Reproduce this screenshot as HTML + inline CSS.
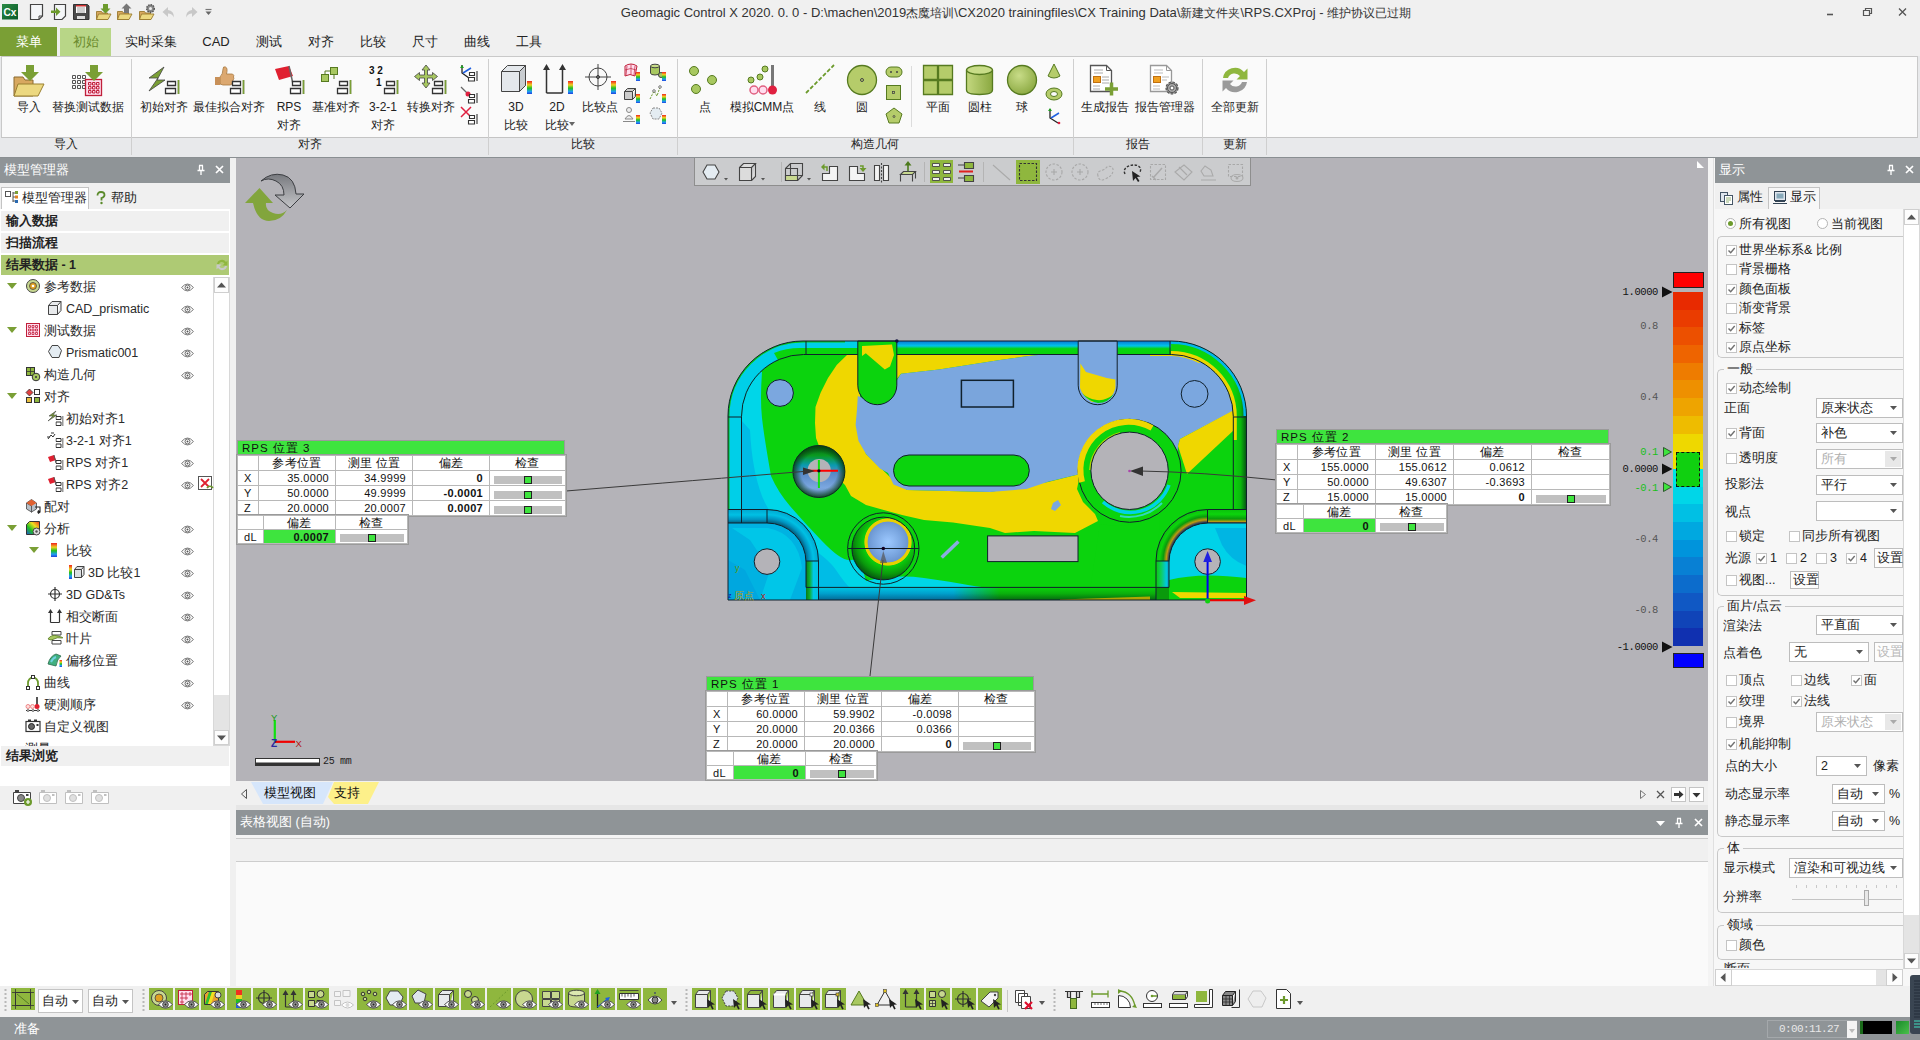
<!DOCTYPE html>
<html lang="zh"><head><meta charset="utf-8"><title>Geomagic Control X</title>
<style>
*{box-sizing:border-box;margin:0;padding:0}
html,body{width:1920px;height:1040px;overflow:hidden;background:#f0f0f0;font-family:"Liberation Sans",sans-serif;font-size:12px;color:#1e1e1e}
.a,.a>*{position:absolute}
.t{white-space:nowrap;line-height:14px;height:14px;overflow:visible}
.c{text-align:center}
svg{display:block;overflow:visible}
/* title */
#title{left:0;top:0;width:1920px;height:27px;background:#f0f0f0}
#ttxt span{font-size:12px}
#ttxt{left:560px;top:5px;width:912px;text-align:center;font-size:13px;letter-spacing:0;color:#333;white-space:nowrap;line-height:15px}
/* menu */
#menu{left:0;top:27px;width:1920px;height:29px;background:#f0f0f0}
#menu .m{top:7px;font-size:13px;width:80px;text-align:center;line-height:15px;white-space:nowrap;color:#222}
/* ribbon */
#ribbon{left:0;top:56px;width:1920px;height:101px;background:#e8e9eb}
#rbody{left:1px;top:0;width:1917px;height:82px;background:#fafafa;border:1px solid #c9c9c9;border-bottom-color:#c4c4c4}
.rsep{top:3px;width:1px;height:96px;background:#cfcfcf}
.rl{top:50px;width:120px;text-align:center;line-height:17px;font-size:12px;white-space:nowrap;color:#222}
.gl{top:81px;width:100px;text-align:center;line-height:15px;font-size:12px;white-space:nowrap;color:#222}
.ri{top:9px;width:34px;height:34px}
.si{width:18px;height:18px}
/* panels */
.ph{background:#8f9497;color:#fff;font-size:12.5px}
.tb{border-collapse:collapse;table-layout:fixed;background:#fff;font-size:11px;line-height:13px;font-family:"Liberation Sans",sans-serif;color:#111;outline:1px solid #9a9a9a}
.tb td{border:1px solid #b8b8b8;height:15px;padding:0 6px 0 0;text-align:right;white-space:nowrap;overflow:hidden;letter-spacing:.3px}
.tb.lo td{height:14px;line-height:12px}
.tb td.h{text-align:center;padding:0;font-size:12px}
.tb td.l{text-align:left;padding:0 0 0 6px}
.tb td.g{background:#3ee43e;font-weight:bold}
.tb b{font-weight:bold}
.tt{background:#3ee43e;font-size:11.5px;line-height:14px;height:15px;padding-left:4px;letter-spacing:1px;color:#111;white-space:nowrap;border:1px solid #9a9a9a;border-bottom:none}
.bar{display:block;margin:3px 0 0 4px;width:68px;height:8px;background:#c0c0c0;position:relative}
.bar i{position:absolute;left:30px;top:0;width:8px;height:8px;background:#3ee43e;border:1px solid #222}
.cl{right:50px;font-size:10.5px;letter-spacing:-.4px;font-family:"Liberation Mono",monospace;white-space:nowrap;line-height:12px}
</style></head><body>
<!--TITLE-->
<div id="title" class="a">
<svg class="a" style="left:0;top:0" width="220" height="27" viewBox="0 0 220 27">
<defs><linearGradient id="cxg" x1="0" y1="0" x2="1" y2="1"><stop offset="0" stop-color="#2a8a44"/><stop offset="1" stop-color="#0a5a2a"/></linearGradient></defs>
<rect x="2" y="4" width="16" height="15.500" fill="url(#cxg)"/><text x="3.500" y="16" font-family="Liberation Sans" font-weight="bold" font-size="11.500" fill="#fff" textLength="13" lengthAdjust="spacingAndGlyphs">Cx</text>
<path d="M30.500 4.500h12v11.500l-3.500 3.500h-8.500z" fill="#f4f6f8" stroke="#444" stroke-width="1.200"/><path d="M42.500 16h-3.500v3.500" fill="none" stroke="#444"/>
<path d="M54.500 4.500h11v11.500l-3.500 3.500h-7.500z" fill="#f4f6f8" stroke="#444" stroke-width="1.200"/><path d="M51 10.500h5v-3l4.500 4.200-4.500 4.200v-3h-5z" fill="#6c9a2c"/>
<path d="M73.500 4.500h14l1.500 1.500v13.500h-15.500z" fill="#4a4a4a" stroke="#333"/><rect x="76" y="5" width="10" height="8" fill="#fff"/><rect x="76" y="5" width="10" height="1.500" fill="#d03030"/><path d="M77 8h8M77 10h8M77 12h8" stroke="#888" stroke-width=".8"/><rect x="77" y="16" width="8" height="3" fill="#ddd"/>
<g id="fld"><path d="M96.500 11.500h5l1 1.500h5v6.500h-11z" fill="#d8a860" stroke="#9a7a30" stroke-width=".9"/><path d="M98.500 14h12.500l-3 5.500h-11.500z" fill="#ecd880" stroke="#9a7a30" stroke-width=".9"/></g>
<path d="M103 4h5v4.500h2.500l-5 5-5-5h2.500z" fill="#6c9a2c"/>
<use href="#fld" x="21"/><path d="M124 13h5v-4.500h2.500l-5-5-5 5h2.500z" fill="#777"/>
<use href="#fld" x="43"/><circle cx="150.500" cy="8.500" r="3.800" fill="#888" stroke="#555" stroke-width="1.400" stroke-dasharray="1.500 1"/><circle cx="150.500" cy="8.500" r="1.500" fill="#eee"/>
<path d="M168 7l-5.500 5 5.500 5v-3.500q4 0 6 4q0-7-6-7.500z" fill="#c8c8c8"/>
<path d="M192 7l5.500 5-5.500 5v-3.500q-4 0-6 4q0-7 6-7.500z" fill="#c8c8c8"/>
<path d="M205.500 9.500h6" stroke="#777" stroke-width="1.200"/><path d="M205.500 11.500h6l-3 3.500z" fill="#666"/>
</svg>
<div id="ttxt">Geomagic Control X 2020. 0. 0 - D:\machen\2019<span>杰魔培训</span>\CX2020 trainingfiles\CX Training Data\<span>新建文件夹</span>\RPS.CXProj - <span>维护协议已过期</span></div>
<svg class="a" style="left:1820px;top:4px" width="96" height="18" viewBox="0 0 96 18">
<path d="M7 10.500h6" stroke="#555" stroke-width="1.600"/>
<path d="M43.500 6.500h6v5h-6zM45.500 6.500v-2h6v5h-2" fill="none" stroke="#555" stroke-width="1.200"/>
<path d="M79 4.500l7 7M86 4.500l-7 7" stroke="#555" stroke-width="1.300"/>
</svg>
</div>
<!--MENU-->
<div id="menu" class="a">
<div style="left:0;top:0;width:57px;height:29px;background:#7a9f35"></div>
<div style="left:60px;top:1px;width:51px;height:28px;background:#b8d687"></div>
<div class="m" style="left:-11px;color:#fff">菜单</div>
<div class="m" style="left:46px;color:#6b8a2c">初始</div>
<div class="m" style="left:111px">实时采集</div>
<div class="m" style="left:176px">CAD</div>
<div class="m" style="left:229px">测试</div>
<div class="m" style="left:281px">对齐</div>
<div class="m" style="left:333px">比较</div>
<div class="m" style="left:385px">尺寸</div>
<div class="m" style="left:437px">曲线</div>
<div class="m" style="left:489px">工具</div>
</div>
<!--RIBBON-->
<div id="ribbon" class="a">
<div id="rbody"></div>
<div class="rsep" style="left:131px"></div><div class="rsep" style="left:488px"></div><div class="rsep" style="left:677px"></div>
<div class="rsep" style="left:1073px"></div><div class="rsep" style="left:1202px"></div><div class="rsep" style="left:1266px"></div>
<div class="rsep" style="left:911px;top:10px;height:61px;background:#dcdcdc"></div>
<!--RIB-START-->
<svg class="ri" style="left:12px;top:9px" width="34" height="34" viewBox="0 0 34 34"><path d="M2 12h9l2 3h8v16h-19z" fill="#d8a860" stroke="#8a6a30"/><path d="M6 19h26l-6 12h-24z" fill="#ecd880" stroke="#9a8030"/><path d="M14 0h8v7h5l-9 9-9-9h5z" fill="#7a9f35"/></svg>
<div class="rl" style="left:-31px;top:43px">导入</div>
<svg class="ri" style="left:71px;top:9px" width="34" height="34" viewBox="0 0 34 34"><g fill="none" stroke="#555" stroke-width="1"><path d="M1.500 10.500h3v3h-3zM6.500 10.500h3v3h-3zM11.500 10.500h3v3h-3zM1.500 15.500h3v3h-3zM6.500 15.500h3v3h-3zM11.500 15.500h3v3h-3zM1.500 20.500h3v3h-3zM6.500 20.500h3v3h-3zM11.500 20.500h3v3h-3z"/></g><rect x="14.500" y="14.500" width="16" height="16" fill="#fde" stroke="#c0203a" stroke-width="1.300"/><g fill="none" stroke="#c0203a"><path d="M17.500 17.500h2.500v2.500h-2.500zM21.500 17.500h2.500v2.500h-2.500zM25.500 17.500h2.500v2.500h-2.500zM17.500 21.500h2.500v2.500h-2.500zM21.500 21.500h2.500v2.500h-2.500zM25.500 21.500h2.500v2.500h-2.500zM17.500 25.500h2.500v2.500h-2.500zM21.500 25.500h2.500v2.500h-2.500zM25.500 25.500h2.500v2.500h-2.500z"/></g><path d="M19 0h8v7h5l-9 9-9-9h5z" fill="#7a9f35"/></svg>
<div class="rl" style="left:28px;top:43px">替换测试数据</div>
<svg class="ri" style="left:147px;top:9px" width="34" height="34" viewBox="0 0 34 34"><path d="M17 2l-15 11h9l-9 13 16-11h-8z" fill="#7a9f35" stroke="#444" stroke-width=".8"/><g transform="translate(0,1)"><path d="M20.500 15.500h8v4h-8zM18.500 22.500h10v5h-10zM31.500 14v14" fill="#fff" stroke="#333" stroke-width="1.300"/><path d="M31.500 14v14" stroke="#7a9f35" stroke-width="1.600"/></g></svg>
<div class="rl" style="left:104px;top:43px">初始对齐</div>
<svg class="ri" style="left:212px;top:9px" width="34" height="34" viewBox="0 0 34 34"><path d="M8 12q3-3 3-8q0-3 2.500-2t1 7h6q2 1 1 3q1 2-.5 3q.5 2-1 3q0 2-2 2h-7l-3-1z" fill="#dca870" stroke="#a87840" stroke-width=".8"/><rect x="3" y="12" width="5" height="8" fill="#c89058"/><g transform="translate(0,1)"><path d="M20.500 15.500h8v4h-8zM18.500 22.500h10v5h-10zM31.500 14v14" fill="#fff" stroke="#333" stroke-width="1.300"/><path d="M31.500 14v14" stroke="#7a9f35" stroke-width="1.600"/></g></svg>
<div class="rl" style="left:169px;top:43px">最佳拟合对齐</div>
<svg class="ri" style="left:272px;top:9px" width="34" height="34" viewBox="0 0 34 34"><path d="M3 4l14-3 4 10-14 4z" fill="#e02030"/><path d="M17 1l4 18" stroke="#666" stroke-width="1.500"/><g transform="translate(0,1)"><path d="M20.500 15.500h8v4h-8zM18.500 22.500h10v5h-10zM31.500 14v14" fill="#fff" stroke="#333" stroke-width="1.300"/><path d="M31.500 14v14" stroke="#7a9f35" stroke-width="1.600"/></g></svg>
<div class="rl" style="left:229px;top:43px">RPS</div>
<div class="rl" style="left:229px;top:61px">对齐</div>
<svg class="ri" style="left:319px;top:9px" width="34" height="34" viewBox="0 0 34 34"><rect x="2.500" y="9.500" width="7" height="7" fill="#a8c860" stroke="#567a20"/><rect x="11.500" y="2.500" width="7" height="7" fill="#a8c860" stroke="#567a20"/><path d="M6 9V6h5M15 10v4" stroke="#567a20" fill="none"/><g transform="translate(0,1)"><path d="M20.500 15.500h8v4h-8zM18.500 22.500h10v5h-10zM31.500 14v14" fill="#fff" stroke="#333" stroke-width="1.300"/><path d="M31.500 14v14" stroke="#7a9f35" stroke-width="1.600"/></g></svg>
<div class="rl" style="left:276px;top:43px">基准对齐</div>
<svg class="ri" style="left:366px;top:9px" width="34" height="34" viewBox="0 0 34 34"><text x="3" y="9" font-family="Liberation Sans" font-weight="bold" font-size="10" fill="#111">3 2</text><text x="10" y="21" font-family="Liberation Sans" font-weight="bold" font-size="10" fill="#111">1</text><g transform="translate(0,1)"><path d="M20.500 15.500h8v4h-8zM18.500 22.500h10v5h-10zM31.500 14v14" fill="#fff" stroke="#333" stroke-width="1.300"/><path d="M31.500 14v14" stroke="#7a9f35" stroke-width="1.600"/></g></svg>
<div class="rl" style="left:323px;top:43px">3-2-1</div>
<div class="rl" style="left:323px;top:61px">对齐</div>
<svg class="ri" style="left:414px;top:9px" width="34" height="34" viewBox="0 0 34 34"><path d="M12 0l4 5h-2.500v5h5v-2.500l5 4-5 4v-2.500h-5v5h2.500l-4 5-4-5h2.500v-5h-5v2.500l-5-4 5-4v2.500h5v-5h-2.500z" fill="#a8c860" stroke="#444" stroke-width=".8"/><g transform="translate(0,1)"><path d="M20.500 15.500h8v4h-8zM18.500 22.500h10v5h-10zM31.500 14v14" fill="#fff" stroke="#333" stroke-width="1.300"/><path d="M31.500 14v14" stroke="#7a9f35" stroke-width="1.600"/></g></svg>
<div class="rl" style="left:371px;top:43px">转换对齐</div>
<svg class="ri" style="left:499px;top:7px" width="34" height="34" viewBox="0 0 34 34"><defs><linearGradient id="rbv" x1="0" y1="0" x2="0" y2="1"><stop offset="0" stop-color="#f02020"/><stop offset=".3" stop-color="#f0d020"/><stop offset=".55" stop-color="#20c020"/><stop offset=".8" stop-color="#20a0f0"/><stop offset="1" stop-color="#2040e0"/></linearGradient></defs><path d="M2.500 8.500h18v20h-18zM2.500 8.500l6-6h18l-6 6M20.500 28.500l6-6v-20" fill="#e4e8ec" stroke="#444" stroke-linejoin="round"/><path d="M20.500 8.500l6-6v20l-6 6z" fill="#c8ccd0" stroke="#444"/><rect x="28" y="18" width="5" height="13" fill="url(#rbv)"/></svg>
<div class="rl" style="left:456px;top:43px">3D</div>
<div class="rl" style="left:456px;top:61px">比较</div>
<svg class="ri" style="left:540px;top:7px" width="34" height="34" viewBox="0 0 34 34"><defs><linearGradient id="rbv" x1="0" y1="0" x2="0" y2="1"><stop offset="0" stop-color="#f02020"/><stop offset=".3" stop-color="#f0d020"/><stop offset=".55" stop-color="#20c020"/><stop offset=".8" stop-color="#20a0f0"/><stop offset="1" stop-color="#2040e0"/></linearGradient></defs><path d="M6.500 30v-24M22.500 30v-24M6.500 30h16" stroke="#333" fill="none" stroke-width="1.500"/><path d="M6.500 1l-3.500 6h7zM22.500 1l-3.500 6h7z" fill="#333"/><rect x="28" y="18" width="5" height="13" fill="url(#rbv)"/></svg>
<div class="rl" style="left:497px;top:43px">2D</div>
<div class="rl" style="left:497px;top:61px">比较</div>
<svg class="ri" style="left:583px;top:7px" width="34" height="34" viewBox="0 0 34 34"><defs><linearGradient id="rbv" x1="0" y1="0" x2="0" y2="1"><stop offset="0" stop-color="#f02020"/><stop offset=".3" stop-color="#f0d020"/><stop offset=".55" stop-color="#20c020"/><stop offset=".8" stop-color="#20a0f0"/><stop offset="1" stop-color="#2040e0"/></linearGradient></defs><circle cx="15" cy="14" r="9" fill="none" stroke="#444" stroke-width="1"/><path d="M15 1v26M2 14h26" stroke="#444" stroke-width="1"/><circle cx="15" cy="14" r="1.500" fill="none" stroke="#333"/><rect x="28" y="18" width="5" height="13" fill="url(#rbv)"/></svg>
<div class="rl" style="left:540px;top:43px">比较点</div>
<svg style="left:569px;top:66px" width="6" height="4"><path d="M0 0h6l-3 4z" fill="#666"/></svg>
<svg class="ri" style="left:688px;top:7px" width="34" height="34" viewBox="0 0 34 34"><circle cx="6" cy="8" r="4.500" fill="#a8c860" stroke="#567a20"/><circle cx="24" cy="17" r="4.500" fill="#a8c860" stroke="#567a20"/><circle cx="8" cy="26" r="4.500" fill="#a8c860" stroke="#567a20"/></svg>
<div class="rl" style="left:645px;top:43px">点</div>
<svg class="ri" style="left:745px;top:7px" width="34" height="34" viewBox="0 0 34 34"><circle cx="6" cy="17" r="3" fill="#a8c860" stroke="#567a20"/><circle cx="15" cy="14" r="3" fill="#a8c860" stroke="#567a20"/><circle cx="20" cy="6" r="3" fill="#a8c860" stroke="#567a20"/><path d="M27.500 2v22" stroke="#777" stroke-width="3"/><circle cx="9" cy="27" r="4" fill="#fde" stroke="#e06080" stroke-width="1.500"/><circle cx="18" cy="27" r="4" fill="#fde" stroke="#e06080" stroke-width="1.500"/><circle cx="27.500" cy="27" r="4.500" fill="#e02040"/></svg>
<div class="rl" style="left:702px;top:43px">模拟CMM点</div>
<svg class="ri" style="left:803px;top:7px" width="34" height="34" viewBox="0 0 34 34"><path d="M3 30l28-28" stroke="#6c9a2c" stroke-width="1.800" stroke-dasharray="4 2"/></svg>
<div class="rl" style="left:760px;top:43px">线</div>
<svg class="ri" style="left:845px;top:7px" width="34" height="34" viewBox="0 0 34 34"><circle cx="17" cy="17" r="14.500" fill="#b5cc6a" stroke="#567a20" stroke-width="1.300"/><circle cx="17" cy="17" r="1.500" fill="none" stroke="#444"/></svg>
<div class="rl" style="left:802px;top:43px">圆</div>
<svg class="ri" style="left:921px;top:7px" width="34" height="34" viewBox="0 0 34 34"><path d="M2.500 2.500h14v14h-14zM17.500 2.500h14v14h-14zM2.500 17.500h14v14h-14zM17.500 17.500h14v14h-14z" fill="#b5cc6a" stroke="#567a20" stroke-width="1.300"/></svg>
<div class="rl" style="left:878px;top:43px">平面</div>
<svg class="ri" style="left:963px;top:7px" width="34" height="34" viewBox="0 0 34 34"><defs><linearGradient id="cyg" x1="0" x2="1"><stop offset="0" stop-color="#c4d880"/><stop offset="1" stop-color="#8aa840"/></linearGradient></defs><path d="M3.500 7v20q0 4.500 13 4.500t13-4.500v-20" fill="url(#cyg)" stroke="#567a20" stroke-width="1.300"/><ellipse cx="16.500" cy="7" rx="13" ry="4.500" fill="#c8dc88" stroke="#567a20" stroke-width="1.300"/></svg>
<div class="rl" style="left:920px;top:43px">圆柱</div>
<svg class="ri" style="left:1005px;top:7px" width="34" height="34" viewBox="0 0 34 34"><defs><radialGradient id="spg" cx=".4" cy=".35" r=".7"><stop offset="0" stop-color="#c8dc88"/><stop offset="1" stop-color="#8aa840"/></radialGradient></defs><circle cx="17" cy="17" r="14.500" fill="url(#spg)" stroke="#567a20" stroke-width="1.300"/></svg>
<div class="rl" style="left:962px;top:43px">球</div>
<svg class="ri" style="left:1088px;top:7px" width="34" height="34" viewBox="0 0 34 34"><path d="M2.500 2.500h16l5 5v21h-21z" fill="#fff" stroke="#555" stroke-width="1.300"/><path d="M18.500 2.500v5h5" fill="none" stroke="#555"/><path d="M6 7h9M6 10h9M14 14h7M14 17h7M14 20h7" stroke="#aaa"/><rect x="5.500" y="13.500" width="7" height="6" fill="#f0a020" stroke="#c07010"/><path d="M5 23h7M5 26h7" stroke="#aaa"/><path d="M17 26h13M23.500 19.500v13" stroke="#7a9f35" stroke-width="3.500"/></svg>
<div class="rl" style="left:1045px;top:43px">生成报告</div>
<svg class="ri" style="left:1148px;top:7px" width="34" height="34" viewBox="0 0 34 34"><path d="M2.500 2.500h16l5 5v21h-21z" fill="#fff" stroke="#999" stroke-width="1.300"/><path d="M18.500 2.500v5h5" fill="none" stroke="#999"/><path d="M6 7h9M6 10h9M14 14h7M14 17h5" stroke="#bbb"/><rect x="5.500" y="13.500" width="7" height="6" fill="#f0a020" stroke="#c07010"/><path d="M5 23h7M5 26h7" stroke="#bbb"/><circle cx="24" cy="25" r="6" fill="#999" stroke="#555" stroke-width="1.200" stroke-dasharray="2.500 1.500"/><circle cx="24" cy="25" r="4.500" fill="#aaa" stroke="#555"/><circle cx="24" cy="25" r="2" fill="#fff" stroke="#555"/></svg>
<div class="rl" style="left:1105px;top:43px">报告管理器</div>
<svg class="ri" style="left:1218px;top:7px" width="34" height="34" viewBox="0 0 34 34"><path d="M5 15a12 12 0 0 1 21-6l3.500-3.500v11h-11l3.500-3.500a7 7 0 0 0-12 2z" fill="#8fb73e"/><path d="M29 19a12 12 0 0 1-21 6l-3.500 3.500v-11h11l-3.500 3.500a7 7 0 0 0 12-2z" fill="#9a9a9a"/></svg>
<div class="rl" style="left:1175px;top:43px">全部更新</div>
<svg class="si" style="left:460px;top:7px" width="18" height="18" viewBox="0 0 18 18"><defs><linearGradient id="rbv" x1="0" y1="0" x2="0" y2="1"><stop offset="0" stop-color="#f02020"/><stop offset=".3" stop-color="#f0d020"/><stop offset=".55" stop-color="#20c020"/><stop offset=".8" stop-color="#20a0f0"/><stop offset="1" stop-color="#2040e0"/></linearGradient></defs><path d="M2 2v8l7 5" stroke="#222" fill="none" stroke-width="1.300"/><path d="M2 2l-2 3h4z" fill="#20a020"/><path d="M3 10l8-5" stroke="#2060e0" stroke-width="1.500"/><path d="M9.500 9.500h5v3h-5zM8.500 14.500h6v3.500h-6zM17 8v10" fill="#fff" stroke="#333" stroke-width="1.100"/></svg>
<svg class="si" style="left:460px;top:29px" width="18" height="18" viewBox="0 0 18 18"><defs><linearGradient id="rbv" x1="0" y1="0" x2="0" y2="1"><stop offset="0" stop-color="#f02020"/><stop offset=".3" stop-color="#f0d020"/><stop offset=".55" stop-color="#20c020"/><stop offset=".8" stop-color="#20a0f0"/><stop offset="1" stop-color="#2040e0"/></linearGradient></defs><path d="M1 2l8 8" stroke="#666" stroke-width="1.300"/><circle cx="8" cy="9" r="2.500" fill="#e02040"/><path d="M9.500 9.500h5v3h-5zM8.500 14.500h6v3.500h-6zM17 8v10" fill="#fff" stroke="#333" stroke-width="1.100"/></svg>
<svg class="si" style="left:460px;top:50px" width="18" height="18" viewBox="0 0 18 18"><defs><linearGradient id="rbv" x1="0" y1="0" x2="0" y2="1"><stop offset="0" stop-color="#f02020"/><stop offset=".3" stop-color="#f0d020"/><stop offset=".55" stop-color="#20c020"/><stop offset=".8" stop-color="#20a0f0"/><stop offset="1" stop-color="#2040e0"/></linearGradient></defs><path d="M1 1l10 10M11 1l-10 10" stroke="#e02040" stroke-width="1.500"/><path d="M9.500 9.500h5v3h-5zM8.500 14.500h6v3.500h-6zM17 8v10" fill="#fff" stroke="#333" stroke-width="1.100"/></svg>
<svg class="si" style="left:623px;top:7px" width="18" height="18" viewBox="0 0 18 18"><defs><linearGradient id="rbv" x1="0" y1="0" x2="0" y2="1"><stop offset="0" stop-color="#f02020"/><stop offset=".3" stop-color="#f0d020"/><stop offset=".55" stop-color="#20c020"/><stop offset=".8" stop-color="#20a0f0"/><stop offset="1" stop-color="#2040e0"/></linearGradient></defs><path d="M2 3q6-4 12 0l-2 10q-5-3-10 0z" fill="#fde" stroke="#c0203a"/><path d="M4 3l-1 9M8 1.500v10M12 3l-1 9M2 7q6-3 11 0" stroke="#c0203a" stroke-width=".7" fill="none"/><rect x="13" y="9" width="4" height="9" fill="url(#rbv)"/></svg>
<svg class="si" style="left:623px;top:29px" width="18" height="18" viewBox="0 0 18 18"><defs><linearGradient id="rbv" x1="0" y1="0" x2="0" y2="1"><stop offset="0" stop-color="#f02020"/><stop offset=".3" stop-color="#f0d020"/><stop offset=".55" stop-color="#20c020"/><stop offset=".8" stop-color="#20a0f0"/><stop offset="1" stop-color="#2040e0"/></linearGradient></defs><path d="M1.500 6.500h8v8h-8zM1.500 6.500l3-3h8l-3 3M9.500 14.500l3-3v-8" fill="#ccc" stroke="#444" stroke-linejoin="round"/><rect x="13" y="9" width="4" height="9" fill="url(#rbv)"/></svg>
<svg class="si" style="left:623px;top:50px" width="18" height="18" viewBox="0 0 18 18"><defs><linearGradient id="rbv" x1="0" y1="0" x2="0" y2="1"><stop offset="0" stop-color="#f02020"/><stop offset=".3" stop-color="#f0d020"/><stop offset=".55" stop-color="#20c020"/><stop offset=".8" stop-color="#20a0f0"/><stop offset="1" stop-color="#2040e0"/></linearGradient></defs><circle cx="6" cy="4" r="2.500" fill="#eee" stroke="#888"/><path d="M2 13q4-7 8 0zM0 15.500h12" fill="#eee" stroke="#888"/><rect x="13" y="9" width="4" height="9" fill="url(#rbv)"/></svg>
<svg class="si" style="left:649px;top:7px" width="18" height="18" viewBox="0 0 18 18"><defs><linearGradient id="rbv" x1="0" y1="0" x2="0" y2="1"><stop offset="0" stop-color="#f02020"/><stop offset=".3" stop-color="#f0d020"/><stop offset=".55" stop-color="#20c020"/><stop offset=".8" stop-color="#20a0f0"/><stop offset="1" stop-color="#2040e0"/></linearGradient></defs><path d="M1.500 3v7q0 2 4.500 2t4.500-2v-7" fill="#a8c860" stroke="#444"/><ellipse cx="6" cy="3" rx="4.500" ry="1.800" fill="#c8dc88" stroke="#444"/><circle cx="12" cy="12" r="2.500" fill="#a8c860" stroke="#444"/><rect x="13" y="9" width="4" height="9" fill="url(#rbv)"/></svg>
<svg class="si" style="left:649px;top:29px" width="18" height="18" viewBox="0 0 18 18"><defs><linearGradient id="rbv" x1="0" y1="0" x2="0" y2="1"><stop offset="0" stop-color="#f02020"/><stop offset=".3" stop-color="#f0d020"/><stop offset=".55" stop-color="#20c020"/><stop offset=".8" stop-color="#20a0f0"/><stop offset="1" stop-color="#2040e0"/></linearGradient></defs><path d="M1 14l4-8 3 5 3-9" fill="none" stroke="#6c9a2c" stroke-dasharray="2 1.200"/><circle cx="5" cy="6" r="1.300" fill="#fff" stroke="#444" stroke-width=".7"/><circle cx="11" cy="2" r="1.300" fill="#fff" stroke="#444" stroke-width=".7"/><rect x="13" y="9" width="4" height="9" fill="url(#rbv)"/></svg>
<svg class="si" style="left:649px;top:50px" width="18" height="18" viewBox="0 0 18 18"><defs><linearGradient id="rbv" x1="0" y1="0" x2="0" y2="1"><stop offset="0" stop-color="#f02020"/><stop offset=".3" stop-color="#f0d020"/><stop offset=".55" stop-color="#20c020"/><stop offset=".8" stop-color="#20a0f0"/><stop offset="1" stop-color="#2040e0"/></linearGradient></defs><path d="M4 2h6l3 5-3 6h-6l-3-6z" fill="#e4ecf2" stroke="#888" stroke-dasharray="2 1"/><rect x="13" y="9" width="4" height="9" fill="url(#rbv)"/></svg>
<svg class="si" style="left:885px;top:7px" width="18" height="18" viewBox="0 0 18 18"><defs><linearGradient id="rbv" x1="0" y1="0" x2="0" y2="1"><stop offset="0" stop-color="#f02020"/><stop offset=".3" stop-color="#f0d020"/><stop offset=".55" stop-color="#20c020"/><stop offset=".8" stop-color="#20a0f0"/><stop offset="1" stop-color="#2040e0"/></linearGradient></defs><rect x="1" y="4" width="16" height="10" rx="5" fill="#b5cc6a" stroke="#567a20"/><circle cx="6" cy="9" r="1" fill="#444"/><circle cx="12" cy="9" r="1" fill="#444"/></svg>
<svg class="si" style="left:885px;top:28px" width="18" height="18" viewBox="0 0 18 18"><defs><linearGradient id="rbv" x1="0" y1="0" x2="0" y2="1"><stop offset="0" stop-color="#f02020"/><stop offset=".3" stop-color="#f0d020"/><stop offset=".55" stop-color="#20c020"/><stop offset=".8" stop-color="#20a0f0"/><stop offset="1" stop-color="#2040e0"/></linearGradient></defs><rect x="1.500" y="1.500" width="14" height="14" fill="#b5cc6a" stroke="#567a20"/><rect x="7.500" y="7.500" width="2" height="2" fill="none" stroke="#444" stroke-width=".8"/></svg>
<svg class="si" style="left:885px;top:51px" width="18" height="18" viewBox="0 0 18 18"><defs><linearGradient id="rbv" x1="0" y1="0" x2="0" y2="1"><stop offset="0" stop-color="#f02020"/><stop offset=".3" stop-color="#f0d020"/><stop offset=".55" stop-color="#20c020"/><stop offset=".8" stop-color="#20a0f0"/><stop offset="1" stop-color="#2040e0"/></linearGradient></defs><path d="M9 1l8 6-3 9h-10l-3-9z" fill="#b5cc6a" stroke="#567a20"/><circle cx="9" cy="9.500" r="1" fill="none" stroke="#444" stroke-width=".8"/></svg>
<svg class="si" style="left:1045px;top:7px" width="18" height="18" viewBox="0 0 18 18"><defs><linearGradient id="rbv" x1="0" y1="0" x2="0" y2="1"><stop offset="0" stop-color="#f02020"/><stop offset=".3" stop-color="#f0d020"/><stop offset=".55" stop-color="#20c020"/><stop offset=".8" stop-color="#20a0f0"/><stop offset="1" stop-color="#2040e0"/></linearGradient></defs><path d="M9 1l6 12q-6 4-12 0z" fill="#b5cc6a" stroke="#567a20"/></svg>
<svg class="si" style="left:1045px;top:29px" width="18" height="18" viewBox="0 0 18 18"><defs><linearGradient id="rbv" x1="0" y1="0" x2="0" y2="1"><stop offset="0" stop-color="#f02020"/><stop offset=".3" stop-color="#f0d020"/><stop offset=".55" stop-color="#20c020"/><stop offset=".8" stop-color="#20a0f0"/><stop offset="1" stop-color="#2040e0"/></linearGradient></defs><ellipse cx="9" cy="9" rx="8" ry="6" fill="#b5cc6a" stroke="#567a20"/><ellipse cx="9" cy="9" rx="3.500" ry="2.500" fill="#fafafa" stroke="#567a20"/></svg>
<svg class="si" style="left:1045px;top:51px" width="18" height="18" viewBox="0 0 18 18"><defs><linearGradient id="rbv" x1="0" y1="0" x2="0" y2="1"><stop offset="0" stop-color="#f02020"/><stop offset=".3" stop-color="#f0d020"/><stop offset=".55" stop-color="#20c020"/><stop offset=".8" stop-color="#20a0f0"/><stop offset="1" stop-color="#2040e0"/></linearGradient></defs><path d="M5 2v9l8 5" stroke="#222" fill="none" stroke-width="1.300"/><path d="M5 1l-2 3h4z" fill="#20a020"/><path d="M6 11l8-5" stroke="#2060e0" stroke-width="1.500"/><circle cx="14" cy="16" r="1.300" fill="#e02040"/></svg>
<div class="gl" style="left:16px">导入</div>
<div class="gl" style="left:260px">对齐</div>
<div class="gl" style="left:533px">比较</div>
<div class="gl" style="left:825px">构造几何</div>
<div class="gl" style="left:1088px">报告</div>
<div class="gl" style="left:1185px">更新</div>
<!--RIB-END-->
</div>
<div class="a" style="left:0;top:157px;width:1920px;height:1px;background:#8a8f92"></div>
<!--LEFT-->
<div id="left" class="a" style="left:0;top:158px;width:236px;height:828px;background:#fff">
<!--LEFT-START-->
<svg width="0" height="0" style="left:0;top:0"><defs>
<symbol id="eye" viewBox="0 0 12 8"><path d="M.5 4Q6-2.400 11.500 4Q6 10.400 .5 4Z" fill="#fff" stroke="#777" stroke-width=".9"/><circle cx="6" cy="4" r="2.300" fill="none" stroke="#666" stroke-width=".9"/><circle cx="6" cy="4" r=".9" fill="#555"/></symbol>
<symbol id="tri" viewBox="0 0 10 6"><path d="M0 0h10l-5 6z" fill="#7a9f35"/></symbol>
<symbol id="albox" viewBox="0 0 8 10"><path d="M.500 .500h5v3h-5zM.500 6h5v3.500h-5zM7.500 0v10" fill="#fff" stroke="#333" stroke-width="1"/></symbol>
</defs></svg>
<div class="ph" style="left:0;top:0;width:230px;height:25px"></div>
<div class="t" style="left:4px;top:5px;color:#fff;font-size:12.500px">模型管理器</div>
<svg style="left:196px;top:6px" width="30" height="12" viewBox="0 0 30 12"><path d="M3 1.500h4M3.500 1.500v5M6.500 1.500v5M1.500 6.500h7M5 6.500v4.500" stroke="#fff" stroke-width="1.300" fill="none"/><path d="M20 2l7 7M27 2l-7 7" stroke="#fff" stroke-width="1.700"/></svg>
<div style="left:230px;top:0;width:6px;height:828px;background:#f0f0f0"></div>
<div style="left:0;top:25px;width:230px;height:26px;background:#f0f0f0"></div>
<div style="left:1px;top:29px;width:88px;height:22px;background:#fff;border:1px solid #c4c4c4;border-bottom:none"></div>
<svg style="left:5px;top:33px" width="14" height="13" viewBox="0 0 14 13"><rect x=".500" y=".500" width="5" height="5" fill="#fff" stroke="#555"/><path d="M8 2h2M8 6h2M8 10h2M8 1v10" stroke="#555"/><rect x="10" y="0" width="3" height="3" fill="#7a9f35"/><rect x="10" y="4.500" width="3" height="3" fill="#e08020"/><rect x="10" y="9" width="3" height="3" fill="#2a6ab0"/></svg>
<div class="t" style="left:22px;top:33px;font-size:12.500px">模型管理器</div>
<svg style="left:96px;top:33px" width="10" height="14" viewBox="0 0 10 14"><path d="M1.500 4.500Q1.500 1 5 1T8.500 4Q8.500 6 5.500 7V9.500" fill="none" stroke="#5a8a2a" stroke-width="1.800"/><circle cx="5.500" cy="12" r="1.200" fill="#5a8a2a"/></svg>
<div class="t" style="left:111px;top:33px;font-size:12.500px">帮助</div>
<div style="left:1px;top:53px;width:228px;height:20px;background:#f0f0f0"></div>
<div class="t" style="left:6px;top:56px;font-weight:bold;font-size:12.500px;color:#222">输入数据</div>
<div style="left:1px;top:75px;width:228px;height:20px;background:#f0f0f0"></div>
<div class="t" style="left:6px;top:78px;font-weight:bold;font-size:12.500px;color:#222">扫描流程</div>
<div style="left:1px;top:97px;width:228px;height:20px;background:#aeca74"></div>
<div class="t" style="left:6px;top:100px;font-weight:bold;font-size:12.500px;color:#222">结果数据 - 1</div>
<svg style="left:215px;top:100px" width="14" height="14" viewBox="0 0 14 14"><path d="M2 6a5 5 0 0 1 9-2l1.500-1.500v5h-5l2-2a3 3 0 0 0-5.500 .5z" fill="#8fb73e"/><path d="M12 8a5 5 0 0 1-9 2l-1.500 1.500v-5h5l-2 2a3 3 0 0 0 5.500-.5z" fill="#c8c8c8"/></svg>
<div style="left:1px;top:588px;width:228px;height:20px;background:#f0f0f0"></div>
<div class="t" style="left:6px;top:591px;font-weight:bold;font-size:12.500px;color:#222">结果浏览</div>
<div style="left:0;top:628px;width:230px;height:24px;background:#f0f0f0"></div>
<svg style="left:13px;top:631px" width="20" height="18" viewBox="0 0 20 18"><path d="M.500 3.500h17v11h-17z" fill="#fff" stroke="#444"/><path d="M2 1h4v2h-4z" fill="#444"/><circle cx="8" cy="9" r="3.500" fill="#888" stroke="#444"/><rect x="13" y="5" width="2.500" height="2" fill="#444"/><circle cx="15" cy="13" r="4" fill="#6c9a2c"/><path d="M13 13h4M15 11v4" stroke="#fff" stroke-width="1.200"/></svg>
<svg style="left:39px;top:631px" width="20" height="18" viewBox="0 0 20 18"><path d="M.500 3.500h17v11h-17z" fill="#fff" stroke="#c0c0c0"/><path d="M2 1h4v2h-4z" fill="#c0c0c0"/><circle cx="8" cy="9" r="3.500" fill="#e0e0e0" stroke="#c0c0c0"/><rect x="13" y="5" width="2.500" height="2" fill="#c0c0c0"/></svg>
<svg style="left:65px;top:631px" width="20" height="18" viewBox="0 0 20 18"><path d="M.500 3.500h17v11h-17z" fill="#fff" stroke="#c0c0c0"/><path d="M2 1h4v2h-4z" fill="#c0c0c0"/><circle cx="8" cy="9" r="3.500" fill="#e0e0e0" stroke="#c0c0c0"/><rect x="13" y="5" width="2.500" height="2" fill="#c0c0c0"/></svg>
<svg style="left:91px;top:631px" width="20" height="18" viewBox="0 0 20 18"><path d="M.500 3.500h17v11h-17z" fill="#fff" stroke="#c0c0c0"/><path d="M2 1h4v2h-4z" fill="#c0c0c0"/><circle cx="8" cy="9" r="3.500" fill="#e0e0e0" stroke="#c0c0c0"/><rect x="13" y="5" width="2.500" height="2" fill="#c0c0c0"/></svg>
<div style="left:213px;top:119px;width:17px;height:469px;background:#fff;border:1px solid #d8d8d8"></div>
<div style="left:214px;top:537px;width:15px;height:35px;background:#e4e4e4"></div>
<div style="left:214px;top:119px;width:15px;height:16px;border:1px solid #cfcfcf;background:#fdfdfd"></div>
<div style="left:214px;top:572px;width:15px;height:15px;border:1px solid #cfcfcf;background:#fdfdfd"></div>
<svg style="left:217px;top:124px" width="9" height="6" viewBox="0 0 9 6"><path d="M0 5.500l4.500-5 4.500 5z" fill="#555"/></svg>
<svg style="left:217px;top:577px" width="9" height="6" viewBox="0 0 9 6"><path d="M0 .5l4.500 5 4.500-5z" fill="#555"/></svg>
<svg style="left:7px;top:125px" width="10" height="6"><use href="#tri" width="10" height="6"/></svg>
<svg style="left:25px;top:120px" width="16" height="16" viewBox="0 0 16 16"><circle cx="8" cy="8" r="6.500" fill="#c8d890" stroke="#444"/><circle cx="8" cy="8" r="3.500" fill="#e0a020" stroke="#444" stroke-width=".8"/><circle cx="8" cy="8" r="1.300" fill="#fff"/></svg>
<div class="t" style="left:44px;top:122px;font-size:12.500px;color:#2a2a2a">参考数据</div>
<svg style="left:181px;top:125px" width="13" height="9"><use href="#eye" width="13" height="9"/></svg>
<svg style="left:47px;top:142px" width="16" height="16" viewBox="0 0 16 16"><path d="M1.500 5.500h9v9h-9zM1.500 5.500l3.500-4h9l-3.500 4M10.500 14.500l3.500-4v-9" fill="#e8eaec" stroke="#444" stroke-linejoin="round"/></svg>
<div class="t" style="left:66px;top:144px;font-size:12.500px;color:#2a2a2a">CAD_prismatic</div>
<svg style="left:181px;top:147px" width="13" height="9"><use href="#eye" width="13" height="9"/></svg>
<svg style="left:7px;top:169px" width="10" height="6"><use href="#tri" width="10" height="6"/></svg>
<svg style="left:25px;top:164px" width="16" height="16" viewBox="0 0 16 16"><rect x="1.500" y="1.500" width="13" height="13" fill="#fde" stroke="#c0203a"/><path d="M3.500 3.500h2v2h-2zM7 3.500h2v2h-2zM10.500 3.500h2v2h-2zM3.500 7h2v2h-2zM7 7h2v2h-2zM10.500 7h2v2h-2zM3.500 10.500h2v2h-2zM7 10.500h2v2h-2zM10.500 10.500h2v2h-2z" fill="none" stroke="#c0203a" stroke-width=".8"/></svg>
<div class="t" style="left:44px;top:166px;font-size:12.500px;color:#2a2a2a">测试数据</div>
<svg style="left:181px;top:169px" width="13" height="9"><use href="#eye" width="13" height="9"/></svg>
<svg style="left:47px;top:186px" width="16" height="16" viewBox="0 0 16 16"><path d="M5 1.500h6l3.500 5-2.500 7h-7l-3.500-6z" fill="#e4ecf2" stroke="#444"/></svg>
<div class="t" style="left:66px;top:188px;font-size:12.500px;color:#2a2a2a">Prismatic001</div>
<svg style="left:181px;top:191px" width="13" height="9"><use href="#eye" width="13" height="9"/></svg>
<svg style="left:25px;top:208px" width="16" height="16" viewBox="0 0 16 16"><rect x="1.500" y="1.500" width="8" height="8" fill="#8fb73e" stroke="#333"/><path d="M5.500 1.500v8M1.500 5.500h8" stroke="#333" stroke-width=".8"/><circle cx="11" cy="11" r="3.800" fill="#a8c860" stroke="#333"/><circle cx="11" cy="11" r="1" fill="#333"/></svg>
<div class="t" style="left:44px;top:210px;font-size:12.500px;color:#2a2a2a">构造几何</div>
<svg style="left:181px;top:213px" width="13" height="9"><use href="#eye" width="13" height="9"/></svg>
<svg style="left:7px;top:235px" width="10" height="6"><use href="#tri" width="10" height="6"/></svg>
<svg style="left:25px;top:230px" width="16" height="16" viewBox="0 0 16 16"><path d="M4.500 1l3.500 3.500-3.500 3.500-3.500-3.500z" fill="#e04040" stroke="#333" stroke-width=".8"/><rect x="9.500" y="1.500" width="5" height="5" fill="#fff" stroke="#333"/><rect x="1.500" y="9.500" width="5" height="5" fill="#e8c040" stroke="#333"/><rect x="9.500" y="9.500" width="5" height="5" fill="#8fb73e" stroke="#333"/></svg>
<div class="t" style="left:44px;top:232px;font-size:12.500px;color:#2a2a2a">对齐</div>
<svg style="left:47px;top:252px" width="16" height="16" viewBox="0 0 16 16"><path d="M9 1l-7 5h4l-5 5 9-6h-4z" fill="#7a9f35" stroke="#444" stroke-width=".6"/><use href="#albox" x="8.500" y="6" width="8" height="10"/></svg>
<div class="t" style="left:66px;top:254px;font-size:12.500px;color:#2a2a2a">初始对齐1</div>
<svg style="left:47px;top:274px" width="16" height="16" viewBox="0 0 16 16"><path d="M1 7l3-4 2 2 2-3" fill="none" stroke="#333" stroke-width="1"/><path d="M0 5h3M4 1h3" stroke="#333"/><use href="#albox" x="8.500" y="6" width="8" height="10"/></svg>
<div class="t" style="left:66px;top:276px;font-size:12.500px;color:#2a2a2a">3-2-1 对齐1</div>
<svg style="left:181px;top:279px" width="13" height="9"><use href="#eye" width="13" height="9"/></svg>
<svg style="left:47px;top:296px" width="16" height="16" viewBox="0 0 16 16"><path d="M1 3l6-2 2 5-6 2z" fill="#e02030"/><path d="M7 1l2 8" stroke="#555" stroke-width="1"/><use href="#albox" x="8.500" y="6" width="8" height="10"/></svg>
<div class="t" style="left:66px;top:298px;font-size:12.500px;color:#2a2a2a">RPS 对齐1</div>
<svg style="left:181px;top:301px" width="13" height="9"><use href="#eye" width="13" height="9"/></svg>
<svg style="left:47px;top:318px" width="16" height="16" viewBox="0 0 16 16"><path d="M1 3l6-2 2 5-6 2z" fill="#e02030"/><path d="M7 1l2 8" stroke="#555" stroke-width="1"/><use href="#albox" x="8.500" y="6" width="8" height="10"/></svg>
<div class="t" style="left:66px;top:320px;font-size:12.500px;color:#2a2a2a">RPS 对齐2</div>
<svg style="left:181px;top:323px" width="13" height="9"><use href="#eye" width="13" height="9"/></svg>
<svg style="left:25px;top:340px" width="16" height="16" viewBox="0 0 16 16"><path d="M1.500 5l5-3.500 5 3.500v6l-5 3-5-3z" fill="#b8c0c8" stroke="#444" stroke-width=".8"/><path d="M1.500 5l5 3v6.500" stroke="#444" stroke-width=".8" fill="none"/><path d="M1.500 5l5 3 5-3-5-3.500z" fill="#e06030"/><path d="M10 9h5v5h-3M15 14l-2-1.500M15 14l-2 1.500" stroke="#222" fill="none" stroke-width="1.100"/></svg>
<div class="t" style="left:44px;top:342px;font-size:12.500px;color:#2a2a2a">配对</div>
<svg style="left:7px;top:367px" width="10" height="6"><use href="#tri" width="10" height="6"/></svg>
<svg style="left:25px;top:362px" width="16" height="16" viewBox="0 0 16 16"><defs><linearGradient id="rb" x1="0" y1="1" x2="1" y2="0"><stop offset="0" stop-color="#2050e0"/><stop offset=".35" stop-color="#20c020"/><stop offset=".65" stop-color="#f0e020"/><stop offset="1" stop-color="#f03020"/></linearGradient></defs><path d="M1.500 4.500l3-3h10v10l-3 3h-10z" fill="url(#rb)" stroke="#333"/><circle cx="11.500" cy="11.500" r="3.500" fill="#ddd" stroke="#444"/><circle cx="11.500" cy="11.500" r="1.200" fill="#555"/></svg>
<div class="t" style="left:44px;top:364px;font-size:12.500px;color:#2a2a2a">分析</div>
<svg style="left:181px;top:367px" width="13" height="9"><use href="#eye" width="13" height="9"/></svg>
<svg style="left:29px;top:389px" width="10" height="6"><use href="#tri" width="10" height="6"/></svg>
<svg style="left:47px;top:384px" width="16" height="16" viewBox="0 0 16 16"><defs><linearGradient id="rb2" x1="0" y1="0" x2="0" y2="1"><stop offset="0" stop-color="#f02020"/><stop offset=".3" stop-color="#f0d020"/><stop offset=".55" stop-color="#20c020"/><stop offset=".8" stop-color="#20a0f0"/><stop offset="1" stop-color="#2040e0"/></linearGradient></defs><rect x="4" y="1" width="6" height="14" fill="url(#rb2)"/></svg>
<div class="t" style="left:66px;top:386px;font-size:12.500px;color:#2a2a2a">比较</div>
<svg style="left:181px;top:389px" width="13" height="9"><use href="#eye" width="13" height="9"/></svg>
<svg style="left:69px;top:406px" width="16" height="16" viewBox="0 0 16 16"><rect x="0" y="1" width="3" height="14" fill="url(#rb2)"/><path d="M5.500 5.500h7v8h-7zM5.500 5.500l2.500-3h7l-2.500 3M12.500 13.500l2.500-3v-8" fill="#dcdfe2" stroke="#444" stroke-linejoin="round"/></svg>
<div class="t" style="left:88px;top:408px;font-size:12.500px;color:#2a2a2a">3D 比较1</div>
<svg style="left:181px;top:411px" width="13" height="9"><use href="#eye" width="13" height="9"/></svg>
<svg style="left:47px;top:428px" width="16" height="16" viewBox="0 0 16 16"><circle cx="8" cy="8" r="4.500" fill="none" stroke="#333" stroke-width="1.200"/><path d="M8 1v14M1 8h14" stroke="#333" stroke-width="1.200"/></svg>
<div class="t" style="left:66px;top:430px;font-size:12.500px;color:#2a2a2a">3D GD&amp;Ts</div>
<svg style="left:181px;top:433px" width="13" height="9"><use href="#eye" width="13" height="9"/></svg>
<svg style="left:47px;top:450px" width="16" height="16" viewBox="0 0 16 16"><path d="M3.500 14.500v-11M12.500 14.500v-11M3.500 14.500h9" stroke="#333" fill="none" stroke-width="1.200"/><path d="M3.500 1l-2.500 4h5zM12.500 1l-2.500 4h5z" fill="#333"/></svg>
<div class="t" style="left:66px;top:452px;font-size:12.500px;color:#2a2a2a">相交断面</div>
<svg style="left:181px;top:455px" width="13" height="9"><use href="#eye" width="13" height="9"/></svg>
<svg style="left:47px;top:472px" width="16" height="16" viewBox="0 0 16 16"><path d="M5 1.500h9v3.500h-9zM5 10.500h9v3.500h-9z" fill="#fff" stroke="#444"/><path d="M1 9q3-5 10-3t4 2q-5-1-8 1t-6 0z" fill="#a8c860" stroke="#567a20" stroke-width=".8"/></svg>
<div class="t" style="left:66px;top:474px;font-size:12.500px;color:#2a2a2a">叶片</div>
<svg style="left:181px;top:477px" width="13" height="9"><use href="#eye" width="13" height="9"/></svg>
<svg style="left:47px;top:494px" width="16" height="16" viewBox="0 0 16 16"><path d="M1 12q2-8 8-10l5 2q-4 3-5 10z" fill="#40b080" stroke="#2a6a4a" stroke-width=".8"/><path d="M4 10q2-4 5-5" stroke="#70d0e0" stroke-width="2" fill="none"/><rect x="12.500" y="8" width="2.500" height="7" fill="url(#rb2)"/></svg>
<div class="t" style="left:66px;top:496px;font-size:12.500px;color:#2a2a2a">偏移位置</div>
<svg style="left:181px;top:499px" width="13" height="9"><use href="#eye" width="13" height="9"/></svg>
<svg style="left:25px;top:516px" width="16" height="16" viewBox="0 0 16 16"><path d="M3 14v-5a5 5.500 0 0 1 10 0v5" fill="none" stroke="#6c9a2c" stroke-width="1.800"/><rect x="1.500" y="12.500" width="3" height="3" fill="#fff" stroke="#333"/><rect x="11.500" y="12.500" width="3" height="3" fill="#fff" stroke="#333"/><rect x="6.500" y="1.500" width="3" height="3" fill="#fff" stroke="#333"/></svg>
<div class="t" style="left:44px;top:518px;font-size:12.500px;color:#2a2a2a">曲线</div>
<svg style="left:181px;top:521px" width="13" height="9"><use href="#eye" width="13" height="9"/></svg>
<svg style="left:25px;top:538px" width="16" height="16" viewBox="0 0 16 16"><path d="M12 1v9" stroke="#555" stroke-width="2"/><circle cx="12" cy="10.500" r="2.500" fill="#e02030"/><circle cx="3" cy="10.500" r="2" fill="#fdd" stroke="#e88"/><circle cx="7.500" cy="10.500" r="2" fill="#fdd" stroke="#e88"/><path d="M1 14.500h14" stroke="#333"/><circle cx="3" cy="14.500" r="1" fill="#fff" stroke="#333" stroke-width=".7"/><circle cx="8" cy="14.500" r="1" fill="#fff" stroke="#333" stroke-width=".7"/><circle cx="13" cy="14.500" r="1" fill="#fff" stroke="#333" stroke-width=".7"/></svg>
<div class="t" style="left:44px;top:540px;font-size:12.500px;color:#2a2a2a">硬测顺序</div>
<svg style="left:181px;top:543px" width="13" height="9"><use href="#eye" width="13" height="9"/></svg>
<svg style="left:25px;top:560px" width="16" height="16" viewBox="0 0 16 16"><rect x="1" y="3.500" width="14" height="10" fill="#fff" stroke="#333" stroke-width="1.200"/><rect x="3" y="1.500" width="3" height="2" fill="#333"/><rect x="9" y="1.500" width="3" height="2" fill="#333"/><circle cx="6.500" cy="8.500" r="3" fill="#666" stroke="#222"/><rect x="11.500" y="6" width="2" height="2" fill="#333"/></svg>
<div class="t" style="left:44px;top:562px;font-size:12.500px;color:#2a2a2a">自定义视图</div>
<svg style="left:198px;top:318px" width="16" height="16" viewBox="0 0 16 16"><rect x=".500" y=".500" width="13" height="13" fill="#fff" stroke="#555"/><path d="M3 3l8 8M11 3l-8 8" stroke="#e02030" stroke-width="1.800"/><path d="M9 12a3.500 3.500 0 0 1 6 0" stroke="#6c9a2c" stroke-width="1.500" fill="none"/></svg>
<div style="left:25px;top:584px;width:100px;height:4px;overflow:hidden"><div class="t" style="left:19px;top:-1px;font-size:12.500px">测量</div><svg style="left:0;top:0" width="16" height="4"><path d="M2 4l5-4v4z" fill="#333"/></svg></div>
<!--LEFT-END-->
</div>
<!--VIEWPORT-->
<div id="vp" class="a" style="left:236px;top:158px;width:1472px;height:623px;background:#b4b3b8;overflow:hidden">
<!--MODEL-START-->
<svg class="a" style="left:0;top:0" width="1472" height="623" viewBox="236 158 1472 623">
<defs>
<clipPath id="body"><path d="M728 600V416A75 75 0 0 1 803 341H1171A75.500 75 0 0 1 1246.500 416V600Z"/></clipPath>
<clipPath id="face"><path d="M741.500 509.500V416.500A62 62 0 0 1 803.500 354.500H1171.300A62 62 0 0 1 1233.300 416.500V509.500H1207.500A51.500 51.500 0 0 0 1156 561V587.400H818.500V561A51.500 51.500 0 0 0 767 509.500Z"/></clipPath>
<linearGradient id="gTop" x1="0" y1="341" x2="0" y2="355" gradientUnits="userSpaceOnUse"><stop offset="0" stop-color="#0a78d8"/><stop offset=".35" stop-color="#00c4e8"/><stop offset=".55" stop-color="#08d410"/><stop offset="1" stop-color="#0ad20c"/></linearGradient>
<linearGradient id="gLeft" x1="728" y1="0" x2="742" y2="0" gradientUnits="userSpaceOnUse"><stop offset="0" stop-color="#0cc418"/><stop offset=".3" stop-color="#00c8e4"/><stop offset="1" stop-color="#00d4e8"/></linearGradient>
<linearGradient id="gRight" x1="1233" y1="0" x2="1247" y2="0" gradientUnits="userSpaceOnUse"><stop offset="0" stop-color="#0cd40c"/><stop offset=".55" stop-color="#0ab80c"/><stop offset="1" stop-color="#064a14"/></linearGradient>
<linearGradient id="gBotL" x1="0" y1="587" x2="0" y2="600" gradientUnits="userSpaceOnUse"><stop offset="0" stop-color="#00c8e4"/><stop offset=".5" stop-color="#00a0cc"/><stop offset="1" stop-color="#046a96"/></linearGradient>
<linearGradient id="gBotR" x1="0" y1="587" x2="0" y2="600" gradientUnits="userSpaceOnUse"><stop offset="0" stop-color="#0cd40c"/><stop offset=".5" stop-color="#0ab00c"/><stop offset="1" stop-color="#066a10"/></linearGradient>
<linearGradient id="gBotMix" x1="818" y1="0" x2="1156" y2="0" gradientUnits="userSpaceOnUse"><stop offset="0" stop-color="#fff" stop-opacity="1"/><stop offset=".4" stop-color="#fff" stop-opacity="1"/><stop offset=".54" stop-color="#fff" stop-opacity="0"/></linearGradient>
<mask id="mBot"><rect x="818" y="587" width="340" height="14" fill="url(#gBotMix)"/></mask>
<radialGradient id="gFilL" cx="767" cy="561" r="51.500" gradientUnits="userSpaceOnUse"><stop offset=".75" stop-color="#04607e"/><stop offset=".82" stop-color="#0094c0"/><stop offset=".9" stop-color="#00c0e4"/><stop offset="1" stop-color="#00a8d0"/></radialGradient>
<radialGradient id="gFilR" cx="1207.500" cy="561" r="51.500" gradientUnits="userSpaceOnUse"><stop offset=".75" stop-color="#2a3a5a"/><stop offset=".8" stop-color="#c09a10"/><stop offset=".86" stop-color="#0a9a0c"/><stop offset=".93" stop-color="#0cd40c"/><stop offset="1" stop-color="#0ac00c"/></radialGradient>
<linearGradient id="gFilLt" x1="0" y1="509.500" x2="0" y2="523" gradientUnits="userSpaceOnUse"><stop offset="0" stop-color="#00a8d0"/><stop offset=".4" stop-color="#00c0e4"/><stop offset=".75" stop-color="#0094c0"/><stop offset="1" stop-color="#04607e"/></linearGradient>
<linearGradient id="gFilLr" x1="818.500" y1="0" x2="806" y2="0" gradientUnits="userSpaceOnUse"><stop offset="0" stop-color="#00c4e0"/><stop offset=".4" stop-color="#00c8e8"/><stop offset=".7" stop-color="#10b030"/><stop offset="1" stop-color="#0a7a18"/></linearGradient>
<linearGradient id="gFilRt" x1="0" y1="509.500" x2="0" y2="523" gradientUnits="userSpaceOnUse"><stop offset="0" stop-color="#0ac00c"/><stop offset=".35" stop-color="#0cd40c"/><stop offset=".7" stop-color="#0a9a0c"/><stop offset=".9" stop-color="#c09a10"/><stop offset="1" stop-color="#2a3a5a"/></linearGradient>
<linearGradient id="gFilRl" x1="1156" y1="0" x2="1169" y2="0" gradientUnits="userSpaceOnUse"><stop offset="0" stop-color="#0cc80c"/><stop offset=".4" stop-color="#10cc60"/><stop offset=".8" stop-color="#00c8e0"/><stop offset="1" stop-color="#0a9ab0"/></linearGradient>
<linearGradient id="gCs" x1="0" y1="445" x2="0" y2="498" gradientUnits="userSpaceOnUse"><stop offset="0" stop-color="#0a5a10"/><stop offset=".2" stop-color="#0a9a20"/><stop offset=".38" stop-color="#0a9ab0"/><stop offset=".55" stop-color="#5a8ac8"/><stop offset=".8" stop-color="#7ba7df"/><stop offset="1" stop-color="#6a90c4"/></linearGradient><radialGradient id="gCsR" cx="819" cy="471.500" r="26" gradientUnits="userSpaceOnUse"><stop offset=".7" stop-color="#063a10" stop-opacity="0"/><stop offset="1" stop-color="#063a10" stop-opacity=".85"/></radialGradient>
<radialGradient id="gSph" cx="888" cy="542" r="40" gradientUnits="userSpaceOnUse"><stop offset="0" stop-color="#9cc8ff"/><stop offset=".35" stop-color="#7aa6e0"/><stop offset=".5" stop-color="#6c96d0"/><stop offset=".52" stop-color="#e8d000"/><stop offset=".58" stop-color="#e8d000"/><stop offset=".6" stop-color="#0ccc0c"/><stop offset=".8" stop-color="#0a9a0c"/><stop offset="1" stop-color="#064a10"/></radialGradient>
</defs>
<!-- body base -->
<g clip-path="url(#body)">
<rect x="728" y="341" width="519" height="259" fill="#0bd30d"/>
<!-- top band -->
<rect x="728" y="341" width="519" height="14" fill="url(#gTop)"/>
<!-- top-left corner cyan -->
<path d="M728 520V416A75 75 0 0 1 803 341H860V355H803A62 62 0 0 0 741.500 416.500V520Z" fill="#00cfe8"/>
<path d="M728 520V416A75 75 0 0 1 803 341H845" fill="none" stroke="#0cc418" stroke-width="3"/>
<path d="M800 348H858V355H803Q790 355 778 360L774 353Q786 348 800 348Z" fill="#0bd30d"/>
<!-- right band -->
<path d="M1171 341A75.500 75 0 0 1 1246.500 416V520H1233.300V416.500A62 62 0 0 0 1171.300 354.500Z" fill="url(#gRight)"/>
<path d="M1171 341A75.500 75 0 0 1 1246.500 416" fill="none" stroke="#00b8e8" stroke-width="6"/>
<path d="M1171 354.500A62 62 0 0 1 1233.300 416.500V440" fill="none" stroke="#ecd600" stroke-width="7"/>
<!-- bottom band -->
<rect x="818" y="587.400" width="340" height="13" fill="url(#gBotR)"/>
<rect x="818" y="587.400" width="340" height="13" fill="url(#gBotL)" mask="url(#mBot)"/>
<path d="M1060 599.500L1150 596.500V600H1060Z" fill="#d8b000" opacity=".8"/>
</g>
<!-- face colour regions -->
<g clip-path="url(#face)">
<rect x="741" y="354" width="493" height="234" fill="#0bd30d"/>
<!-- cyan lower-left -->
<path d="M741 366L762 372Q760 400 762 418T771 476Q778 492 790 506T822 541T851 560T866 581Q895 574 924 578T968 585T1000 588H741Z" fill="#00d6e8"/>
<path d="M741 420L750 430Q752 470 762 496T800 540T836 570T850 588H741Z" fill="#00bce6"/>
<!-- yellow swoosh -->
<path d="M848 354H860V397L856 425L866 454L889 476L907 490L990 492L1048 482L1080 474L1077 489L1083 502L1095 514L1098 521L1075 533L1034 531L1005 533L990 528L953 522.500L924 520L902 515L882 509.400L866 505L851 496L845 485L830 470L819 446L816 438L815 423L815.500 407L820.600 392.700L828 378L836.700 365Z" fill="#efd700"/>
<path d="M896 354H1050L1026.500 356.200L1000 360L939 369.400L901 373.700L896 380Z" fill="#efd700"/>
<!-- light blue region -->
<path d="M857.800 396L857 409L855.600 425L858.500 441L866 454L880 468.500L888 473L893.500 484.600L907 490L990 492L1026.500 489L1048 481.700L1080 474L1094 437L1130 425L1165 441L1177 458L1178 446L1180 439L1233.300 411V354H1048L1026.500 356.200L1000 360L939 369.400L901 373.700L897 380L880 405Z" fill="#7ba7df"/>
<!-- right yellow wedge -->
<path d="M1234 410L1180 439L1178 446L1187 474L1234 430Z" fill="#efd700"/>
<path d="M1194 354A62 62 0 0 1 1233.300 400" fill="none" stroke="#efd700" stroke-width="6"/>
<path d="M1150 354.500H1171.300A62 62 0 0 1 1200 362" fill="none" stroke="#efd700" stroke-width="3"/>
<!-- green blob lower right of ring -->
<path d="M1100 524Q1130 530 1160 515L1156 590H1090Z" fill="#0bd30d"/>
<path d="M1053 503l5 -3 3 5 -6 6 -4 -2z" fill="#7ba7df"/>
</g>
<!-- lower-left pocket -->
<path d="M728 509.500H767A51.500 51.500 0 0 1 818.500 561V600H728Z" fill="#00b4e4"/>
<path d="M728 523H767A39 39 0 0 1 806 562V600H728Z" fill="#00b2e2"/>
<path d="M732 528H768Q798 534 802 568L790 600H760L770 570L750 540Z" fill="#00ccea" opacity=".75"/>
<path d="M728 560L745 570L760 600H728Z" fill="#00a4de" opacity=".8"/>
<path d="M767 509.500A51.500 51.500 0 0 1 818.500 561H806A39 39 0 0 0 767 523Z" fill="url(#gFilL)"/>
<rect x="728" y="509.500" width="39" height="13.500" fill="url(#gFilLt)"/>
<rect x="806" y="561" width="12.500" height="39" fill="url(#gFilLr)"/>
<!-- lower-right pocket -->
<path d="M1246.500 509.500H1207.500A51.500 51.500 0 0 0 1156 561V600H1246.500Z" fill="#0bd30d"/>
<path d="M1246.500 523H1208A39 39 0 0 0 1169 562V580Q1200 572 1246.500 578Z" fill="#00d2e8"/>
<path d="M1215 528H1246.500V566Q1230 560 1222 545Z" fill="#00b0e2" opacity=".85"/>
<path d="M1172 592L1180 598H1246V593Z" fill="#efd700"/>
<path d="M1207.500 509.500A51.500 51.500 0 0 0 1156 561H1169A39 39 0 0 1 1208 523Z" fill="url(#gFilR)"/>
<rect x="1207.500" y="509.500" width="39" height="13.500" fill="url(#gFilRt)"/>
<rect x="1156" y="561" width="13" height="39" fill="url(#gFilRl)"/>
<path d="M1156 587.400H1169V600H1156Z" fill="#0a9a0c"/>
<!-- features -->
<g stroke="#10202c" stroke-width="1" fill="none">
<!-- slot 1 -->
<path d="M857.800 341V385.200A19.500 19.500 0 0 0 896.800 385.200V341Z" fill="#0bd30d"/>
<path d="M862 346L892 344.600L894 355L890 366.500L884.800 369.400L865.800 353.300L862 356Z" fill="#efd700" stroke="none"/>
<!-- slot 2 -->
<path d="M1078.200 341V385.200A19.500 19.500 0 0 0 1117.200 385.200V341Z" fill="#7ba7df"/>
<path d="M1080.400 363.500L1086 372L1106.700 378L1115.400 379.600V388Q1113 398 1104 401L1092 402Q1083 397 1080 388Z" fill="#efd700" stroke="none"/>
<path d="M1082 393Q1088 401 1098 403Q1108 403 1114 394Q1106 401 1097 400Q1088 399 1082 393Z" fill="#0bd30d" stroke="none"/>
<!-- small holes -->
<circle cx="780" cy="393" r="13.400" fill="#7ba7df"/>
<circle cx="1194.600" cy="393.900" r="13.400" fill="#7ba7df"/>
<circle cx="767" cy="561.600" r="12.800" fill="#b4b3b8"/>
<circle cx="1207.600" cy="561.600" r="12.800" fill="#b4b3b8"/>
<!-- rect pocket -->
<rect x="961.400" y="380.300" width="52" height="26.700" fill="#7aa5dc" stroke-width="1.500"/>
<!-- oblong slot -->
<rect x="893.500" y="455" width="135.800" height="31" rx="15.500" fill="#0bd30d"/>
<!-- rect hole -->
<rect x="987.600" y="535.900" width="90.400" height="25.700" fill="#b4b3b8"/>
<!-- big hole -->
<circle cx="1129.600" cy="470.800" r="51.500" fill="#0bd30d"/>
<path d="M1082 482A48 48 0 0 1 1152 428" fill="none" stroke="#efd700" stroke-width="6"/><path d="M1090 470A40 40 0 0 1 1120 433" fill="none" stroke="#efd700" stroke-width="2" opacity=".7"/>
<path d="M1103 502A41 41 0 0 0 1169 485" fill="none" stroke="#00d2e8" stroke-width="3.500"/><path d="M1120 516A46 46 0 0 0 1162 503" fill="none" stroke="#30d8c0" stroke-width="2"/>
<circle cx="1129.600" cy="470.800" r="38.700" fill="#b4b3b8"/>
<!-- countersunk -->
<circle cx="818.900" cy="471.500" r="26" fill="url(#gCs)"/>
<circle cx="818.900" cy="471.500" r="26" fill="url(#gCsR)" stroke="none"/>
<circle cx="819.200" cy="470.500" r="11.600" fill="#b4b3b8" stroke="none"/>
<!-- sphere dimple -->
<circle cx="883.300" cy="548.500" r="35.700"/>
<circle cx="883.300" cy="548.500" r="31.400" fill="url(#gSph)"/>
<path d="M848 548.500H919"/>
<!-- edge lines -->
<path d="M741.500 523V416.500A62 62 0 0 1 803.500 354.500H857.800M896.800 354.500H1078.200M1117.200 354.500H1171.300A62 62 0 0 1 1233.300 416.500V509.500"/>
<path d="M728 600V416A75 75 0 0 1 803 341H1171A75.500 75 0 0 1 1246.500 416V600Z"/>
<path d="M728 509.500H767A51.500 51.500 0 0 1 818.500 561V600M728 523H767A39 39 0 0 1 806 562V587.400H1169V562A39 39 0 0 1 1208 523H1246M1246.500 509.500H1207.500A51.500 51.500 0 0 0 1156 561V600M767 509.500V523M806 561H818.500M1156 561H1169M1207.500 509.500V523M806 341V355M1170 341V355M728 417H741.500M1233.300 417H1246.500"/>
</g>
<path d="M941.700 557.500L958.400 541.500" stroke="#8aace0" stroke-width="3.500"/>
<circle cx="896.800" cy="341" r="1.800" fill="#101040"/>
<!-- RPS3 cross -->
<path d="M818.900 460V488" stroke="#10e010" stroke-width="2"/><path d="M803 470.800H838" stroke="#f00" stroke-width="2"/>
<path d="M803 467.500L815 471L803 475Z" fill="#333"/><circle cx="818.900" cy="470.800" r="1.600" fill="#102"/>
<!-- leader lines -->
<path d="M566 491Q700 480 803 471.500" fill="none" stroke="#3a3a3a" stroke-width="1"/>
<path d="M1277 480Q1200 472 1140 471" fill="none" stroke="#3a3a3a" stroke-width="1"/><path d="M1130 471L1143 466.500V476Z" fill="#333"/><circle cx="1129.500" cy="471" r="1.300" fill="#a4a"/>
<path d="M870 676L883 560" fill="none" stroke="#3a3a3a" stroke-width="1"/><path d="M883.300 551L880 563H887Z" fill="#555" opacity=".7"/><circle cx="883.300" cy="548.500" r="1.800" fill="#102"/>
<!-- origin axes -->
<path d="M1207.600 600V560" stroke="#0000f0" stroke-width="2"/><path d="M1207.600 551L1203.300 562H1212Z" fill="#2020e0"/>
<path d="M1207.600 600.300H1246" stroke="#f00000" stroke-width="2"/><path d="M1256 600.300L1244 596V605Z" fill="#e01010"/><circle cx="1207.600" cy="601" r="2.500" fill="#10d010"/>
<text x="735" y="571" font-size="9" fill="#5a9a10" font-family="Liberation Sans">y</text>
<text x="734" y="599" font-size="10" fill="#b0a010" font-family="Liberation Sans">原点</text><text x="761" y="599" font-size="9" fill="#c01010" font-family="Liberation Sans">x</text><text x="728" y="598" font-size="7" fill="#1010a0" font-family="Liberation Sans">z</text>
</svg>
<!--MODEL-END-->
<!--VPI-START-->
<!-- viewport toolbar -->
<div class="a" style="left:458px;top:0;width:557px;height:28px;background:#cbccce;border:1px solid #8e8e8e;border-top:none">
<svg class="a" style="left:0;top:0" width="557" height="27" viewBox="694 158 557 27">
<g stroke="#444" stroke-width="1.100" fill="none">
<path d="M702 172l4-7h8l4 7-4 7h-8z" fill="#e4ecf2"/><path d="M723 178h4l-2 2.500z" fill="#555" stroke="none"/>
<path d="M738.500 167.500h12v13h-12zM738.500 167.500l4-4h12l-4 4M750.500 180.500l4-4v-13" fill="#dcdcdc"/><path d="M760 178h4l-2 2.500z" fill="#555" stroke="none"/>
<path d="M784.500 168.500h12v12h-12zM784.500 168.500l5-5h12v12l-5 5M789.500 163.500v12h12M789.500 175.500l-5 5" fill="none"/><path d="M784.500 175.500h12v5h-12z" fill="#c8d890"/><path d="M806 178h4l-2 2.500z" fill="#555" stroke="none"/>
<path d="M828.500 166.500h8v14h-15v-7h7z" fill="#f4f4f4"/><path d="M826 171v-4h-3l0 0" stroke="#6c9a2c" stroke-width="1.500"/><path d="M820 167l3.500-3.500v7z" fill="#6c9a2c" stroke="none"/>
<path d="M848.500 166.500h8v7h7v7h-15z" fill="#f4f4f4"/><path d="M859 166h3v3" stroke="#6c9a2c" stroke-width="1.500"/><path d="M862 172l-3.500-4h7z" fill="#6c9a2c" stroke="none"/>
<path d="M873.500 165.500h5v15h-5zM882.500 165.500h5v15h-5z" fill="#f4f4f4"/><path d="M880.500 163v20" stroke-dasharray="2 1.500"/>
<path d="M899.500 174.500l3-3h12l-3 3zM899.500 174.500v7M911.500 174.500v7M914.500 171.500v7" fill="#c8d890"/><path d="M907 171v-6" stroke="#4c7a1c" stroke-width="1.600"/><path d="M907 161l-3.500 4.500h7z" fill="#4c7a1c" stroke="none"/>
<rect x="929" y="160" width="23" height="23" fill="#8fb73e" stroke="none"/>
<path d="M931.500 163.500h7v3h-7zM942.500 163.500h7v3h-7zM931.500 170.500h7v3h-7zM942.500 170.500h7v3h-7zM931.500 177.500h7v3h-7zM942.500 177.500h7v3h-7z" fill="#f0f0f0" stroke-width=".9"/>
<path d="M957 165h6M957 178h6M963.500 162.500h9v6h-9zM963.500 175.500h9v6h-9z" fill="#8fb73e"/><path d="M958 171.500h14" stroke="#e02020" stroke-width="2"/>
<path d="M992 165l17 15" stroke="#aaa"/>
<rect x="1015" y="160" width="24" height="24" fill="#8fb73e" stroke="none"/><rect x="1018.500" y="163.500" width="17" height="17" stroke="#333" stroke-dasharray="2.500 1.500"/>
<g stroke="#a8a8a8" stroke-dasharray="2.500 1.500"><circle cx="1053" cy="172" r="8"/><circle cx="1079" cy="172" r="8"/><path d="M1097 176c-2-6 6-5 8-8s8-2 7 3-4 6-8 8-6 1-7-3z"/><rect x="1149.500" y="164.500" width="15" height="15"/><rect x="1227.500" y="164.500" width="14" height="12"/></g>
<path d="M1050 172h6M1053 169v6M1076 172h6M1079 169v6" stroke="#a8a8a8"/>
<path d="M1124 174c-3-6 4-9 9-9s8 3 6 7" stroke="#333" stroke-dasharray="2.500 1.500" stroke-width="1.400"/><path d="M1131 171l1 10 2.500-3 2.500 4 1.500-1-2.500-4 3.500-.5z" fill="#222" stroke="none"/>
<path d="M1152 178l9-10M1151 176l4 4" stroke="#aaa" stroke-width="1.500"/>
<path d="M1174 172l9-7 8 7-8 8zM1178 167l8 8" stroke="#aaa"/><path d="M1200 180h15M1203 176h9l-2-6-6-4-4 5z" stroke="#aaa"/>
<ellipse cx="1236" cy="178" rx="6" ry="3.500" stroke="#aaa"/><circle cx="1236" cy="178" r="1.500" fill="#aaa" stroke="none"/>
</g>
<path d="M780.500 162v20M923.500 162v20M982.500 162v20" stroke="#b4b4b4"/>
</svg>
</div>
<!-- rotate icon -->
<svg class="a" style="left:8px;top:14px" width="64" height="52" viewBox="244 172 64 52">
<defs><linearGradient id="gra" x1="0" y1="174" x2="0" y2="208" gradientUnits="userSpaceOnUse"><stop offset="0" stop-color="#77797e"/><stop offset="1" stop-color="#c4c5c8"/></linearGradient></defs>
<path d="M261 181q10-9 22-6t13 19h8l-14 14-15-13h9q0-10-8-14t-15 0z" fill="url(#gra)" stroke="#3c3e42" stroke-width="1"/>
<path d="M245 203l14.500-15 13.500 15h-7q-1 7 7 10t14-3q-6 11-18 11t-16-18z" fill="#82a53c"/>
</svg>
<!-- axes + scale -->
<svg class="a" style="left:14px;top:552px" width="120" height="64" viewBox="250 710 120 64">
<path d="M274.800 741.500V720" stroke="#10e010" stroke-width="2.200"/><path d="M274.800 741.800H295" stroke="#f00000" stroke-width="2.200"/>
<text x="271" y="721" font-family="Liberation Sans" font-size="9.500" fill="#1a9a1a">Y</text>
<text x="295.500" y="746.500" font-family="Liberation Sans" font-size="9.500" fill="#b01818">X</text>
<text x="271" y="747" font-family="Liberation Sans" font-size="10" font-weight="bold" fill="#2a2aa0">Z</text>
<rect x="255" y="758" width="65" height="8" fill="#333"/><rect x="256" y="759" width="63" height="3.500" fill="#fff"/>
<text x="323" y="763.500" font-family="Liberation Mono" font-size="10" fill="#222" letter-spacing="-.3">25 mm</text>
</svg>
<!-- RPS 3 -->
<div class="a" style="left:1px;top:282px;width:328px;height:103px">
<div class="tt" style="left:0;top:0;width:328px">RPS 位置 3</div>
<table class="tb" style="left:0;top:15px;width:328px"><colgroup><col style="width:21px"><col style="width:77px"><col style="width:77px"><col style="width:77px"><col style="width:76px"></colgroup>
<tr><td></td><td class="h">参考位置</td><td class="h">测里 位置</td><td class="h">偏差</td><td class="h">检查</td></tr>
<tr><td class="l">X</td><td>35.0000</td><td>34.9999</td><td><b>0</b></td><td class="l" style="padding:0"><span class="bar"><i></i></span></td></tr>
<tr><td class="l">Y</td><td>50.0000</td><td>49.9999</td><td><b>-0.0001</b></td><td class="l" style="padding:0"><span class="bar"><i></i></span></td></tr>
<tr><td class="l">Z</td><td>20.0000</td><td>20.0007</td><td><b>0.0007</b></td><td class="l" style="padding:0"><span class="bar"><i></i></span></td></tr></table>
<table class="tb lo" style="left:0;top:75px;width:170px"><colgroup><col style="width:26px"><col style="width:72px"><col style="width:72px"></colgroup>
<tr><td></td><td class="h">偏差</td><td class="h">检查</td></tr>
<tr><td class="l">dL</td><td class="g">0.0007</td><td class="l" style="padding:0"><span class="bar" style="width:64px;margin-top:2px"><i style="left:28px"></i></span></td></tr></table>
</div>
<!-- RPS 2 -->
<div class="a" style="left:1040px;top:271px;width:333px;height:103px">
<div class="tt" style="left:0;top:0;width:333px">RPS 位置 2</div>
<table class="tb" style="left:0;top:15px;width:333px"><colgroup><col style="width:21px"><col style="width:78px"><col style="width:78px"><col style="width:78px"><col style="width:78px"></colgroup>
<tr><td></td><td class="h">参考位置</td><td class="h">测里 位置</td><td class="h">偏差</td><td class="h">检查</td></tr>
<tr><td class="l">X</td><td>155.0000</td><td>155.0612</td><td>0.0612</td><td></td></tr>
<tr><td class="l">Y</td><td>50.0000</td><td>49.6307</td><td>-0.3693</td><td></td></tr>
<tr><td class="l">Z</td><td>15.0000</td><td>15.0000</td><td><b>0</b></td><td class="l" style="padding:0"><span class="bar" style="width:70px"><i style="left:31px"></i></span></td></tr></table>
<table class="tb lo" style="left:0;top:75px;width:170px"><colgroup><col style="width:27px"><col style="width:72px"><col style="width:71px"></colgroup>
<tr><td></td><td class="h">偏差</td><td class="h">检查</td></tr>
<tr><td class="l">dL</td><td class="g">0</td><td class="l" style="padding:0"><span class="bar" style="width:64px;margin-top:2px"><i style="left:28px"></i></span></td></tr></table>
</div>
<!-- RPS 1 -->
<div class="a" style="left:470px;top:518px;width:328px;height:104px">
<div class="tt" style="left:0;top:0;width:328px">RPS 位置 1</div>
<table class="tb" style="left:0;top:15px;width:328px"><colgroup><col style="width:21px"><col style="width:77px"><col style="width:77px"><col style="width:77px"><col style="width:76px"></colgroup>
<tr><td></td><td class="h">参考位置</td><td class="h">测里 位置</td><td class="h">偏差</td><td class="h">检查</td></tr>
<tr><td class="l">X</td><td>60.0000</td><td>59.9902</td><td>-0.0098</td><td></td></tr>
<tr><td class="l">Y</td><td>20.0000</td><td>20.0366</td><td>0.0366</td><td></td></tr>
<tr><td class="l">Z</td><td>20.0000</td><td>20.0000</td><td><b>0</b></td><td class="l" style="padding:0"><span class="bar"><i></i></span></td></tr></table>
<table class="tb lo" style="left:0;top:75px;width:170px"><colgroup><col style="width:27px"><col style="width:72px"><col style="width:71px"></colgroup>
<tr><td></td><td class="h">偏差</td><td class="h">检查</td></tr>
<tr><td class="l">dL</td><td class="g">0</td><td class="l" style="padding:0"><span class="bar" style="width:64px;margin-top:2px"><i style="left:28px"></i></span></td></tr></table>
</div>
<!-- colour bar -->
<div class="a" style="left:1380px;top:110px;width:92px;height:405px">
<div style="left:57px;top:4px;width:31px;height:16px;background:#ff0000;border:1px solid #222"></div>
<div style="left:57px;top:24px;width:30px;height:354px;background:linear-gradient(#e82a00 0 5%,#ea3c00 0 10%,#ec5000 0 15%,#ee6400 0 20%,#ee7c00 0 25%,#ee9000 0 30%,#eea400 0 35%,#eebc00 0 40%,#eed800 0 45%,#f0e000 0 50%,#00e4e8 0 55%,#00d6e8 0 60%,#00c0e4 0 65%,#00a8e0 0 70%,#0094dc 0 75%,#0880d4 0 80%,#0c6ccc 0 85%,#1058c4 0 90%,#1044b8 0 95%,#1030b0 0)"></div>
<div style="left:60px;top:184px;width:24px;height:35px;background:#10d010;border:1px dashed #111"></div>
<div style="left:57px;top:385px;width:31px;height:15px;background:#0000ff;border:1px solid #222"></div>
<svg style="left:46px;top:18px" width="12" height="372" viewBox="0 0 12 372"><path d="M0 .5l10.500 5.500-10.500 5.500zM0 177.500l10.500 5.500-10.500 5.500zM0 355.500l10.500 5.500-10.500 5.500z" fill="#111"/><path d="M1.500 161.500l8 4.500-8 4.500zM1.500 196.500l8 4.500-8 4.500z" fill="#3ee43e" stroke="#1a3a1a" stroke-width=".8"/></svg>
<div class="cl" style="top:18px;color:#111">1.0000</div>
<div class="cl" style="top:52px;color:#555">0.8</div>
<div class="cl" style="top:123px;color:#555">0.4</div>
<div class="cl" style="top:178px;color:#18c018">0.1</div>
<div class="cl" style="top:195px;color:#111">0.0000</div>
<div class="cl" style="top:214px;color:#18c018">-0.1</div>
<div class="cl" style="top:265px;color:#555">-0.4</div>
<div class="cl" style="top:336px;color:#555">-0.8</div>
<div class="cl" style="top:373px;color:#111">-1.0000</div>
</div>
<!-- small corner arrow -->
<svg class="a" style="left:1461px;top:3px" width="8" height="8" viewBox="0 0 8 8"><path d="M0 0l7 7h-7z" fill="#fff"/></svg>
<!--VPI-END-->
</div>
<!--BELOW-VP-->
<div id="below" class="a" style="left:236px;top:781px;width:1478px;height:205px;background:#f0f0f0">
<!--BELOW-START-->
<svg style="left:0;top:0" width="160" height="25" viewBox="236 781 160 25"><path d="M251 782h82l-10 22h-60z" fill="#d6e6fb"/><path d="M334 782h45l-11 22h-34l-6-7z" fill="#fdf08a"/><path d="M246.500 789.500l-5 4.500 5 4.500z" fill="none" stroke="#555"/></svg>
<div class="t" style="left:28px;top:5px;font-size:12.500px;color:#111">模型视图</div>
<div class="t" style="left:98px;top:5px;font-size:12.500px;color:#111">支持</div>
<svg style="left:1400px;top:5px" width="72" height="17" viewBox="1636 786 72 17"><path d="M1640.500 790.500l5 4-5 4z" fill="none" stroke="#777"/><path d="M1657 791l7 7M1664 791l-7 7" stroke="#555" stroke-width="1.300"/><rect x="1671.500" y="787.500" width="14" height="14" fill="#fff" stroke="#c4c4c4"/><path d="M1674 793h5v-2.500l4.500 4-4.500 4v-2.500h-5z" fill="#333"/><rect x="1689.500" y="787.500" width="14" height="14" fill="#fff" stroke="#c4c4c4"/><path d="M1692.500 793h8l-4 4.500z" fill="#333"/></svg>
<div style="left:0;top:24px;width:1473px;height:5px;background:#e6e6e6"></div>
<div class="ph" style="left:0;top:29px;width:1473px;height:25px"></div>
<div class="t" style="left:4px;top:34px;font-size:12.500px;color:#fff">表格视图 (自动)</div>
<svg style="left:1416px;top:36px" width="56" height="12" viewBox="0 0 56 12"><path d="M4 4h9l-4.500 5z" fill="#fff"/><path d="M25 1.500h4M25.500 1.500v5M28.500 1.500v5M23.500 6.500h7M27 6.500v4.500" stroke="#fff" stroke-width="1.300" fill="none"/><path d="M43 2l7 7M50 2l-7 7" stroke="#fff" stroke-width="1.700"/></svg>
<div style="left:0;top:54px;width:1473px;height:151px;background:#fafafa"></div>
<div style="left:0;top:54px;width:1473px;height:3px;background:#f4f4f4"></div>
<div style="left:0;top:57px;width:1473px;height:24px;background:#f0f0f0;border-top:1px solid #cdcdcd;border-bottom:1px solid #cdcdcd"></div>
<div style="left:1473px;top:0;width:5px;height:205px;background:#f4f4f4"></div>
<!--BELOW-END-->
</div>
<!--RIGHT-->
<div id="right" class="a" style="left:1708px;top:158px;width:212px;height:828px;background:#f7f7f7">
<!--RIGHT-START-->
<div style="left:0;top:0;width:6px;height:828px;background:#f4f4f4"></div>
<div style="left:5px;top:0;width:1px;height:828px;background:#e0e0e0"></div>
<div class="ph" style="left:7px;top:0;width:205px;height:25px"></div>
<div class="t" style="left:11px;top:5px;font-size:12.500px;color:#fff;">显示</div>
<svg style="left:178px;top:6px" width="30" height="12" viewBox="0 0 30 12"><path d="M3 1.500h4M3.500 1.500v5M6.500 1.500v5M1.500 6.500h7M5 6.500v4.500" stroke="#fff" stroke-width="1.300" fill="none"/><path d="M20 2l7 7M27 2l-7 7" stroke="#fff" stroke-width="1.700"/></svg>
<div style="left:7px;top:25px;width:205px;height:26px;background:#f0f0f0"></div>
<div style="left:60px;top:29px;width:52px;height:22px;background:#f7f7f7;border:1px solid #c4c4c4;border-bottom:none"></div>
<svg style="left:12px;top:33px" width="14" height="14" viewBox="0 0 14 14"><rect x=".500" y="1.500" width="7" height="9" fill="#dfe6ee" stroke="#456"/><rect x="4.500" y="4.500" width="8" height="9" fill="#fff" stroke="#456"/><path d="M6 7h5M6 9h5M6 11h3" stroke="#8a6" stroke-width=".9"/></svg>
<div class="t" style="left:29px;top:32px;font-size:12.500px;color:#222;">属性</div>
<svg style="left:65px;top:33px" width="14" height="14" viewBox="0 0 14 14"><rect x="1.500" y=".500" width="11" height="9" fill="#dfe6ee" stroke="#345"/><rect x="3.500" y="2.500" width="7" height="5" fill="#8ab"/><path d="M0 12.500h14M2 10.500h10" stroke="#345" stroke-width="1.200"/></svg>
<div class="t" style="left:82px;top:32px;font-size:12.500px;color:#222;">显示</div>
<div style="left:17px;top:60px;width:11px;height:11px;border-radius:50%;background:#fff;border:1px solid #b4b4b4"></div>
<div style="left:20px;top:63px;width:5px;height:5px;border-radius:50%;background:#6c9a2c"></div>
<div style="left:109px;top:60px;width:11px;height:11px;border-radius:50%;background:#fff;border:1px solid #b4b4b4"></div>
<div class="t" style="left:31px;top:59px;font-size:12.500px;color:#222;">所有视图</div>
<div class="t" style="left:123px;top:59px;font-size:12.500px;color:#222;">当前视图</div>
<div style="left:9px;top:78px;width:190px;height:122px;border:1px solid #c8c8c8;border-right:none;border-radius:5px 0 0 5px"></div>
<div style="left:18px;top:87px;width:11px;height:11px;background:#fff;border:1px solid #c4c4c4"></div>
<svg style="left:19px;top:88px" width="9" height="9" viewBox="0 0 9 9"><path d="M1.500 4.500l2.200 2.300 4-4.800" fill="none" stroke="#707070" stroke-width="1.400"/></svg>
<div class="t" style="left:31px;top:85px;font-size:12.500px;color:#222;">世界坐标系&amp; 比例</div>
<div style="left:18px;top:106px;width:11px;height:11px;background:#fff;border:1px solid #c4c4c4"></div>
<div class="t" style="left:31px;top:104px;font-size:12.500px;color:#222;">背景栅格</div>
<div style="left:18px;top:126px;width:11px;height:11px;background:#fff;border:1px solid #c4c4c4"></div>
<svg style="left:19px;top:127px" width="9" height="9" viewBox="0 0 9 9"><path d="M1.500 4.500l2.200 2.300 4-4.800" fill="none" stroke="#707070" stroke-width="1.400"/></svg>
<div class="t" style="left:31px;top:124px;font-size:12.500px;color:#222;">颜色面板</div>
<div style="left:18px;top:145px;width:11px;height:11px;background:#fff;border:1px solid #c4c4c4"></div>
<div class="t" style="left:31px;top:143px;font-size:12.500px;color:#222;">渐变背景</div>
<div style="left:18px;top:165px;width:11px;height:11px;background:#fff;border:1px solid #c4c4c4"></div>
<svg style="left:19px;top:166px" width="9" height="9" viewBox="0 0 9 9"><path d="M1.500 4.500l2.200 2.300 4-4.800" fill="none" stroke="#707070" stroke-width="1.400"/></svg>
<div class="t" style="left:31px;top:163px;font-size:12.500px;color:#222;">标签</div>
<div style="left:18px;top:184px;width:11px;height:11px;background:#fff;border:1px solid #c4c4c4"></div>
<svg style="left:19px;top:185px" width="9" height="9" viewBox="0 0 9 9"><path d="M1.500 4.500l2.200 2.300 4-4.800" fill="none" stroke="#707070" stroke-width="1.400"/></svg>
<div class="t" style="left:31px;top:182px;font-size:12.500px;color:#222;">原点坐标</div>
<div style="left:9px;top:211px;width:190px;height:227px;border:1px solid #c8c8c8;border-right:none;border-radius:5px 0 0 5px"></div>
<div class="t" style="left:16px;top:204px;font-size:12.500px;background:#f7f7f7;padding:0 3px;color:#222">一般</div>
<div style="left:18px;top:225px;width:11px;height:11px;background:#fff;border:1px solid #c4c4c4"></div>
<svg style="left:19px;top:226px" width="9" height="9" viewBox="0 0 9 9"><path d="M1.500 4.500l2.200 2.300 4-4.800" fill="none" stroke="#707070" stroke-width="1.400"/></svg>
<div class="t" style="left:31px;top:223px;font-size:12.500px;color:#222;">动态绘制</div>
<div class="t" style="left:16px;top:243px;font-size:12.500px;color:#222;">正面</div>
<div style="left:108px;top:240px;width:87px;height:20px;background:#fff;border:1px solid #bdbdbd"></div>
<svg style="left:182px;top:248px" width="7" height="4" viewBox="0 0 7 4"><path d="M0 0h7l-3.500 4z" fill="#555"/></svg>
<div class="t" style="left:113px;top:243px;font-size:12.500px;color:#222;">原来状态</div>
<div style="left:18px;top:270px;width:11px;height:11px;background:#fff;border:1px solid #c4c4c4"></div>
<svg style="left:19px;top:271px" width="9" height="9" viewBox="0 0 9 9"><path d="M1.500 4.500l2.200 2.300 4-4.800" fill="none" stroke="#707070" stroke-width="1.400"/></svg>
<div class="t" style="left:31px;top:268px;font-size:12.500px;color:#222;">背面</div>
<div style="left:108px;top:265px;width:87px;height:20px;background:#fff;border:1px solid #bdbdbd"></div>
<svg style="left:182px;top:273px" width="7" height="4" viewBox="0 0 7 4"><path d="M0 0h7l-3.500 4z" fill="#555"/></svg>
<div class="t" style="left:113px;top:268px;font-size:12.500px;color:#222;">补色</div>
<div style="left:18px;top:295px;width:11px;height:11px;background:#fff;border:1px solid #c4c4c4"></div>
<div class="t" style="left:31px;top:293px;font-size:12.500px;color:#222;">透明度</div>
<div style="left:108px;top:291px;width:87px;height:20px;background:#fff;border:1px solid #bdbdbd"></div>
<div style="left:177px;top:293px;width:16px;height:16px;background:#e8e8e8"></div>
<svg style="left:182px;top:299px" width="7" height="4" viewBox="0 0 7 4"><path d="M0 0h7l-3.500 4z" fill="#aaa"/></svg>
<div class="t" style="left:113px;top:294px;font-size:12.500px;color:#b0b0b0;">所有</div>
<div class="t" style="left:17px;top:319px;font-size:12.500px;color:#222;">投影法</div>
<div style="left:108px;top:317px;width:87px;height:20px;background:#fff;border:1px solid #bdbdbd"></div>
<svg style="left:182px;top:325px" width="7" height="4" viewBox="0 0 7 4"><path d="M0 0h7l-3.500 4z" fill="#555"/></svg>
<div class="t" style="left:113px;top:320px;font-size:12.500px;color:#222;">平行</div>
<div class="t" style="left:17px;top:347px;font-size:12.500px;color:#222;">视点</div>
<div style="left:108px;top:343px;width:87px;height:20px;background:#fff;border:1px solid #bdbdbd"></div>
<svg style="left:182px;top:351px" width="7" height="4" viewBox="0 0 7 4"><path d="M0 0h7l-3.500 4z" fill="#555"/></svg>
<div style="left:18px;top:373px;width:11px;height:11px;background:#fff;border:1px solid #c4c4c4"></div>
<div class="t" style="left:31px;top:371px;font-size:12.500px;color:#222;">锁定</div>
<div style="left:81px;top:373px;width:11px;height:11px;background:#fff;border:1px solid #c4c4c4"></div>
<div class="t" style="left:94px;top:371px;font-size:12.500px;color:#222;">同步所有视图</div>
<div class="t" style="left:17px;top:393px;font-size:12.500px;color:#222;">光源</div>
<div style="left:48px;top:395px;width:11px;height:11px;background:#fff;border:1px solid #c4c4c4"></div>
<svg style="left:49px;top:396px" width="9" height="9" viewBox="0 0 9 9"><path d="M1.500 4.500l2.200 2.300 4-4.800" fill="none" stroke="#707070" stroke-width="1.400"/></svg>
<div class="t" style="left:62px;top:393px;font-size:12.500px;color:#222;">1</div>
<div style="left:78px;top:395px;width:11px;height:11px;background:#fff;border:1px solid #c4c4c4"></div>
<div class="t" style="left:92px;top:393px;font-size:12.500px;color:#222;">2</div>
<div style="left:108px;top:395px;width:11px;height:11px;background:#fff;border:1px solid #c4c4c4"></div>
<div class="t" style="left:122px;top:393px;font-size:12.500px;color:#222;">3</div>
<div style="left:138px;top:395px;width:11px;height:11px;background:#fff;border:1px solid #c4c4c4"></div>
<svg style="left:139px;top:396px" width="9" height="9" viewBox="0 0 9 9"><path d="M1.500 4.500l2.200 2.300 4-4.800" fill="none" stroke="#707070" stroke-width="1.400"/></svg>
<div class="t" style="left:152px;top:393px;font-size:12.500px;color:#222;">4</div>
<div style="left:166px;top:390px;width:29px;height:20px;background:#fdfdfd;border:1px solid #bdbdbd"></div>
<div class="t" style="left:169px;top:393px;font-size:12.500px;color:#222;">设置</div>
<div style="left:18px;top:417px;width:11px;height:11px;background:#fff;border:1px solid #c4c4c4"></div>
<div class="t" style="left:31px;top:415px;font-size:12.500px;color:#222;">视图...</div>
<div style="left:82px;top:413px;width:29px;height:18px;background:#fdfdfd;border:1px solid #bdbdbd"></div>
<div class="t" style="left:85px;top:415px;font-size:12.500px;color:#222;">设置</div>
<div style="left:9px;top:448px;width:190px;height:231px;border:1px solid #c8c8c8;border-right:none;border-radius:5px 0 0 5px"></div>
<div class="t" style="left:16px;top:441px;font-size:12.500px;background:#f7f7f7;padding:0 3px;color:#222">面片/点云</div>
<div class="t" style="left:15px;top:461px;font-size:12.500px;color:#222;">渲染法</div>
<div style="left:108px;top:457px;width:87px;height:20px;background:#fff;border:1px solid #bdbdbd"></div>
<svg style="left:182px;top:465px" width="7" height="4" viewBox="0 0 7 4"><path d="M0 0h7l-3.500 4z" fill="#555"/></svg>
<div class="t" style="left:113px;top:460px;font-size:12.500px;color:#222;">平直面</div>
<div class="t" style="left:15px;top:488px;font-size:12.500px;color:#222;">点着色</div>
<div style="left:81px;top:484px;width:80px;height:20px;background:#fff;border:1px solid #bdbdbd"></div>
<svg style="left:148px;top:492px" width="7" height="4" viewBox="0 0 7 4"><path d="M0 0h7l-3.500 4z" fill="#555"/></svg>
<div class="t" style="left:86px;top:487px;font-size:12.500px;color:#222;">无</div>
<div style="left:166px;top:484px;width:29px;height:20px;background:#fdfdfd;border:1px solid #bdbdbd"></div>
<div class="t" style="left:169px;top:487px;font-size:12.500px;color:#b8b8b8;">设置</div>
<div style="left:18px;top:517px;width:11px;height:11px;background:#fff;border:1px solid #c4c4c4"></div>
<div class="t" style="left:31px;top:515px;font-size:12.500px;color:#222;">顶点</div>
<div style="left:83px;top:517px;width:11px;height:11px;background:#fff;border:1px solid #c4c4c4"></div>
<div class="t" style="left:96px;top:515px;font-size:12.500px;color:#222;">边线</div>
<div style="left:143px;top:517px;width:11px;height:11px;background:#fff;border:1px solid #c4c4c4"></div>
<svg style="left:144px;top:518px" width="9" height="9" viewBox="0 0 9 9"><path d="M1.500 4.500l2.200 2.300 4-4.800" fill="none" stroke="#707070" stroke-width="1.400"/></svg>
<div class="t" style="left:156px;top:515px;font-size:12.500px;color:#222;">面</div>
<div style="left:18px;top:538px;width:11px;height:11px;background:#fff;border:1px solid #c4c4c4"></div>
<svg style="left:19px;top:539px" width="9" height="9" viewBox="0 0 9 9"><path d="M1.500 4.500l2.200 2.300 4-4.800" fill="none" stroke="#707070" stroke-width="1.400"/></svg>
<div class="t" style="left:31px;top:536px;font-size:12.500px;color:#222;">纹理</div>
<div style="left:83px;top:538px;width:11px;height:11px;background:#fff;border:1px solid #c4c4c4"></div>
<svg style="left:84px;top:539px" width="9" height="9" viewBox="0 0 9 9"><path d="M1.500 4.500l2.200 2.300 4-4.800" fill="none" stroke="#707070" stroke-width="1.400"/></svg>
<div class="t" style="left:96px;top:536px;font-size:12.500px;color:#222;">法线</div>
<div style="left:18px;top:559px;width:11px;height:11px;background:#fff;border:1px solid #c4c4c4"></div>
<div class="t" style="left:31px;top:557px;font-size:12.500px;color:#222;">境界</div>
<div style="left:108px;top:554px;width:87px;height:20px;background:#fff;border:1px solid #bdbdbd"></div>
<div style="left:177px;top:556px;width:16px;height:16px;background:#e8e8e8"></div>
<svg style="left:182px;top:562px" width="7" height="4" viewBox="0 0 7 4"><path d="M0 0h7l-3.500 4z" fill="#aaa"/></svg>
<div class="t" style="left:113px;top:557px;font-size:12.500px;color:#b0b0b0;">原来状态</div>
<div style="left:18px;top:581px;width:11px;height:11px;background:#fff;border:1px solid #c4c4c4"></div>
<svg style="left:19px;top:582px" width="9" height="9" viewBox="0 0 9 9"><path d="M1.500 4.500l2.200 2.300 4-4.800" fill="none" stroke="#707070" stroke-width="1.400"/></svg>
<div class="t" style="left:31px;top:579px;font-size:12.500px;color:#222;">机能抑制</div>
<div class="t" style="left:17px;top:601px;font-size:12.500px;color:#222;">点的大小</div>
<div style="left:108px;top:598px;width:51px;height:20px;background:#fff;border:1px solid #bdbdbd"></div>
<svg style="left:146px;top:606px" width="7" height="4" viewBox="0 0 7 4"><path d="M0 0h7l-3.500 4z" fill="#555"/></svg>
<div class="t" style="left:113px;top:601px;font-size:12.500px;color:#222;">2</div>
<div class="t" style="left:165px;top:601px;font-size:12.500px;color:#222;">像素</div>
<div class="t" style="left:17px;top:629px;font-size:12.500px;color:#222;">动态显示率</div>
<div style="left:124px;top:626px;width:53px;height:20px;background:#fff;border:1px solid #bdbdbd"></div>
<svg style="left:164px;top:634px" width="7" height="4" viewBox="0 0 7 4"><path d="M0 0h7l-3.500 4z" fill="#555"/></svg>
<div class="t" style="left:129px;top:629px;font-size:12.500px;color:#222;">自动</div>
<div class="t" style="left:181px;top:629px;font-size:12.500px;color:#222;">%</div>
<div class="t" style="left:17px;top:656px;font-size:12.500px;color:#222;">静态显示率</div>
<div style="left:124px;top:653px;width:53px;height:20px;background:#fff;border:1px solid #bdbdbd"></div>
<svg style="left:164px;top:661px" width="7" height="4" viewBox="0 0 7 4"><path d="M0 0h7l-3.500 4z" fill="#555"/></svg>
<div class="t" style="left:129px;top:656px;font-size:12.500px;color:#222;">自动</div>
<div class="t" style="left:181px;top:656px;font-size:12.500px;color:#222;">%</div>
<div style="left:9px;top:690px;width:190px;height:65px;border:1px solid #c8c8c8;border-right:none;border-radius:5px 0 0 5px"></div>
<div class="t" style="left:16px;top:683px;font-size:12.500px;background:#f7f7f7;padding:0 3px;color:#222">体</div>
<div class="t" style="left:15px;top:703px;font-size:12.500px;color:#222;">显示模式</div>
<div style="left:81px;top:700px;width:114px;height:20px;background:#fff;border:1px solid #bdbdbd"></div>
<svg style="left:182px;top:708px" width="7" height="4" viewBox="0 0 7 4"><path d="M0 0h7l-3.500 4z" fill="#555"/></svg>
<div class="t" style="left:86px;top:703px;font-size:12.500px;color:#222;">渲染和可视边线</div>
<div class="t" style="left:15px;top:732px;font-size:12.500px;color:#222;">分辨率</div>
<div style="left:84px;top:741px;width:110px;height:1px;background:#c4c4c4"></div>
<svg style="left:88px;top:727px" width="106" height="4"><path d="M0.5 0v3M10.5 0v3M20.5 0v3M30.5 0v3M40.5 0v3M50.5 0v3M60.5 0v3M70.5 0v3M80.5 0v3M90.5 0v3M100.5 0v3" stroke="#c8c8c8"/></svg>
<div style="left:156px;top:732px;width:5px;height:16px;background:#e8e8e8;border:1px solid #aaa"></div>
<div style="left:9px;top:767px;width:190px;height:35px;border:1px solid #c8c8c8;border-right:none;border-radius:5px 0 0 5px"></div>
<div class="t" style="left:16px;top:760px;font-size:12.500px;background:#f7f7f7;padding:0 3px;color:#222">领域</div>
<div style="left:18px;top:782px;width:11px;height:11px;background:#fff;border:1px solid #c4c4c4"></div>
<div class="t" style="left:31px;top:780px;font-size:12.500px;color:#222;">颜色</div>
<div style="left:16px;top:804px;width:60px;height:6px;overflow:hidden"><div class="t" style="left:3px;top:0;font-size:12.500px">断面</div></div>
<div style="left:195px;top:51px;width:17px;height:760px;background:#fff;border:1px solid #d8d8d8"></div>
<div style="left:196px;top:757px;width:15px;height:38px;background:#e4e4e4"></div>
<div style="left:196px;top:51px;width:15px;height:16px;border:1px solid #cfcfcf;background:#fdfdfd"></div>
<div style="left:196px;top:795px;width:15px;height:16px;border:1px solid #cfcfcf;background:#fdfdfd"></div>
<svg style="left:199px;top:56px" width="9" height="6" viewBox="0 0 9 6"><path d="M0 5.500l4.500-5 4.500 5z" fill="#555"/></svg>
<svg style="left:199px;top:800px" width="9" height="6" viewBox="0 0 9 6"><path d="M0 .5l4.500 5 4.500-5z" fill="#555"/></svg>
<div style="left:7px;top:811px;width:188px;height:17px;background:#fff;border:1px solid #d8d8d8"></div>
<div style="left:168px;top:812px;width:10px;height:15px;background:#e4e4e4"></div>
<div style="left:7px;top:811px;width:17px;height:17px;border:1px solid #cfcfcf;background:#fdfdfd"></div>
<div style="left:178px;top:811px;width:17px;height:17px;border:1px solid #cfcfcf;background:#fdfdfd"></div>
<svg style="left:12px;top:815px" width="6" height="9" viewBox="0 0 6 9"><path d="M5.500 0l-5 4.500 5 4.500z" fill="#555"/></svg>
<svg style="left:184px;top:815px" width="6" height="9" viewBox="0 0 6 9"><path d="M.5 0l5 4.500-5 4.500z" fill="#555"/></svg>
<!--RIGHT-END-->
</div>
<!--BOTTOM-->
<div id="btb" class="a" style="left:0;top:986px;width:1920px;height:31px;background:#f0f0f0">
<!--BTB-START-->
<svg style="left:4px;top:3px" width="3" height="22" viewBox="0 0 3 22"><path d="M1.500 0v22" stroke="#b8b8b8" stroke-width="2" stroke-dasharray="2 2"/></svg>
<svg style="left:11px;top:2px" width="24" height="22" viewBox="0 0 24 22"><rect x="0" y="0" width="24" height="22" fill="#8fb73e"/><rect x="4.500" y="4.500" width="15" height="13" fill="none" stroke="#333"/><path d="M4.500 1v20M19.500 1v20M1 4.500h22M1 17.500h22" stroke="#333" stroke-width=".8"/><path d="M6 6l12 10" stroke="#456a20" stroke-width=".8"/></svg>
<div style="left:38px;top:3px;width:45px;height:24px;background:#fff;border:1px solid #c4c4c4"></div>
<div class="t" style="left:42px;top:8px;font-size:12.500px">自动</div>
<svg style="left:72px;top:14px" width="7" height="4"><path d="M0 0h7l-3.500 4z" fill="#555"/></svg>
<div style="left:88px;top:3px;width:45px;height:24px;background:#fff;border:1px solid #c4c4c4"></div>
<div class="t" style="left:92px;top:8px;font-size:12.500px">自动</div>
<svg style="left:122px;top:14px" width="7" height="4"><path d="M0 0h7l-3.500 4z" fill="#555"/></svg>
<svg style="left:142px;top:3px" width="3" height="22" viewBox="0 0 3 22"><path d="M1.500 0v22" stroke="#b8b8b8" stroke-width="2" stroke-dasharray="2 2"/></svg>
<svg style="left:149px;top:2px" width="24" height="22" viewBox="0 0 24 22"><rect x="0" y="0" width="24" height="22" fill="#8fb73e"/><circle cx="10" cy="10" r="7.500" fill="#c8d890" stroke="#444"/><circle cx="10" cy="10" r="4" fill="#e0a020" stroke="#444" stroke-width=".8"/><path d="M9.500 16.500q7-7.500 14 0q-7 7.500-14 0z" fill="#fff" stroke="#444" stroke-width=".9"/><circle cx="16.500" cy="16.500" r="2.800" fill="#999" stroke="#333" stroke-width=".9"/><circle cx="16.500" cy="16.500" r="1" fill="#222"/></svg>
<svg style="left:175px;top:2px" width="24" height="22" viewBox="0 0 24 22"><rect x="0" y="0" width="24" height="22" fill="#8fb73e"/><rect x="3.500" y="2.500" width="14" height="14" fill="#fde" stroke="#c0203a"/><path d="M6 5h2v2h-2zM10 5h2v2h-2zM14 5h2v2h-2zM6 9h2v2h-2zM10 9h2v2h-2zM6 13h2v2h-2z" fill="none" stroke="#c0203a" stroke-width=".8"/><path d="M9.500 16.500q7-7.500 14 0q-7 7.500-14 0z" fill="#fff" stroke="#444" stroke-width=".9"/><circle cx="16.500" cy="16.500" r="2.800" fill="#999" stroke="#333" stroke-width=".9"/><circle cx="16.500" cy="16.500" r="1" fill="#222"/></svg>
<svg style="left:201px;top:2px" width="24" height="22" viewBox="0 0 24 22"><rect x="0" y="0" width="24" height="22" fill="#8fb73e"/><path d="M3.500 6.500l3-3h11v10l-3 3h-11z" fill="#e8a030" stroke="#333"/><path d="M4 16l4-12h3l-4 12z" fill="#30c030"/><path d="M7 16l4-12h3l-4 12z" fill="#f0e020"/><circle cx="17" cy="7" r="3" fill="#ddd" stroke="#444"/><path d="M9.500 16.500q7-7.500 14 0q-7 7.500-14 0z" fill="#fff" stroke="#444" stroke-width=".9"/><circle cx="16.500" cy="16.500" r="2.800" fill="#999" stroke="#333" stroke-width=".9"/><circle cx="16.500" cy="16.500" r="1" fill="#222"/></svg>
<svg style="left:227px;top:2px" width="24" height="22" viewBox="0 0 24 22"><rect x="0" y="0" width="24" height="22" fill="#8fb73e"/><rect x="9" y="2" width="6" height="5" fill="#f03020"/><rect x="9" y="7" width="6" height="4" fill="#f0d020"/><rect x="9" y="11" width="6" height="4" fill="#20c020"/><rect x="9" y="15" width="6" height="5" fill="#2060e0"/><path d="M9.500 16.500q7-7.500 14 0q-7 7.500-14 0z" fill="#fff" stroke="#444" stroke-width=".9"/><circle cx="16.500" cy="16.500" r="2.800" fill="#999" stroke="#333" stroke-width=".9"/><circle cx="16.500" cy="16.500" r="1" fill="#222"/></svg>
<svg style="left:253px;top:2px" width="24" height="22" viewBox="0 0 24 22"><rect x="0" y="0" width="24" height="22" fill="#8fb73e"/><circle cx="11" cy="10" r="5.500" fill="none" stroke="#333" stroke-width="1.200"/><path d="M11 2v16M3 10h16" stroke="#333" stroke-width="1.200"/><path d="M9.500 16.500q7-7.500 14 0q-7 7.500-14 0z" fill="#fff" stroke="#444" stroke-width=".9"/><circle cx="16.500" cy="16.500" r="2.800" fill="#999" stroke="#333" stroke-width=".9"/><circle cx="16.500" cy="16.500" r="1" fill="#222"/></svg>
<svg style="left:279px;top:2px" width="24" height="22" viewBox="0 0 24 22"><rect x="0" y="0" width="24" height="22" fill="#8fb73e"/><path d="M6.500 19v-12M14.500 19v-12M6.500 19h8" stroke="#333" fill="none" stroke-width="1.200"/><path d="M6.500 2l-3 5h6zM14.500 2l-3 5h6z" fill="#333"/><path d="M9.500 16.500q7-7.500 14 0q-7 7.500-14 0z" fill="#fff" stroke="#444" stroke-width=".9"/><circle cx="16.500" cy="16.500" r="2.800" fill="#999" stroke="#333" stroke-width=".9"/><circle cx="16.500" cy="16.500" r="1" fill="#222"/></svg>
<svg style="left:305px;top:2px" width="24" height="22" viewBox="0 0 24 22"><rect x="0" y="0" width="24" height="22" fill="#8fb73e"/><path d="M3.500 3.500h6v6h-6zM3.500 12.500h6v6h-6zM12 12.500h6v6h-6z" fill="#c8d890" stroke="#333"/><circle cx="15.500" cy="6" r="3.500" fill="#c8d890" stroke="#333"/><path d="M9.500 16.500q7-7.500 14 0q-7 7.500-14 0z" fill="#fff" stroke="#444" stroke-width=".9"/><circle cx="16.500" cy="16.500" r="2.800" fill="#999" stroke="#333" stroke-width=".9"/><circle cx="16.500" cy="16.500" r="1" fill="#222"/></svg>
<svg style="left:331px;top:2px" width="24" height="22" viewBox="0 0 24 22"><path d="M3.500 3.500h6v5h-6zM12 2.500h7v6h-7zM3.500 12.500h6v5h-6z" fill="#f4f4f4" stroke="#c4c4c4"/><path d="M10.500 17q6-6 12 0q-6 6-12 0z" fill="#fff" stroke="#c4c4c4"/><circle cx="16.500" cy="17" r="2" fill="#ddd"/></svg>
<svg style="left:357px;top:2px" width="24" height="22" viewBox="0 0 24 22"><rect x="0" y="0" width="24" height="22" fill="#8fb73e"/><circle cx="6" cy="6" r="1.800" fill="#c8d890" stroke="#333"/><circle cx="12" cy="4" r="1.800" fill="#c8d890" stroke="#333"/><circle cx="18" cy="6" r="1.800" fill="#c8d890" stroke="#333"/><circle cx="8" cy="11" r="1.800" fill="#c8d890" stroke="#333"/><path d="M9.500 16.500q7-7.500 14 0q-7 7.500-14 0z" fill="#fff" stroke="#444" stroke-width=".9"/><circle cx="16.500" cy="16.500" r="2.800" fill="#999" stroke="#333" stroke-width=".9"/><circle cx="16.500" cy="16.500" r="1" fill="#222"/></svg>
<svg style="left:383px;top:2px" width="24" height="22" viewBox="0 0 24 22"><rect x="0" y="0" width="24" height="22" fill="#8fb73e"/><path d="M7 3h8l5 6-3 8h-10l-4-7z" fill="#e4ecf2" stroke="#444"/><path d="M9.500 16.500q7-7.500 14 0q-7 7.500-14 0z" fill="#fff" stroke="#444" stroke-width=".9"/><circle cx="16.500" cy="16.500" r="2.800" fill="#999" stroke="#333" stroke-width=".9"/><circle cx="16.500" cy="16.500" r="1" fill="#222"/></svg>
<svg style="left:409px;top:2px" width="24" height="22" viewBox="0 0 24 22"><rect x="0" y="0" width="24" height="22" fill="#8fb73e"/><path d="M9 2l8 4-2 9h-9l-3-7z" fill="#dde4ea" stroke="#444"/><path d="M9.500 16.500q7-7.500 14 0q-7 7.500-14 0z" fill="#fff" stroke="#444" stroke-width=".9"/><circle cx="16.500" cy="16.500" r="2.800" fill="#999" stroke="#333" stroke-width=".9"/><circle cx="16.500" cy="16.500" r="1" fill="#222"/></svg>
<svg style="left:435px;top:2px" width="24" height="22" viewBox="0 0 24 22"><rect x="0" y="0" width="24" height="22" fill="#8fb73e"/><path d="M3.500 6.500h11v12h-11zM3.500 6.500l4-4h11l-4 4M14.500 18.500l4-4v-12" fill="#e8eaec" stroke="#444" stroke-linejoin="round"/><path d="M9.500 16.500q7-7.500 14 0q-7 7.500-14 0z" fill="#fff" stroke="#444" stroke-width=".9"/><circle cx="16.500" cy="16.500" r="2.800" fill="#999" stroke="#333" stroke-width=".9"/><circle cx="16.500" cy="16.500" r="1" fill="#222"/></svg>
<svg style="left:461px;top:2px" width="24" height="22" viewBox="0 0 24 22"><rect x="0" y="0" width="24" height="22" fill="#8fb73e"/><circle cx="7" cy="6" r="3.500" fill="#c8d890" stroke="#333"/><circle cx="14" cy="12" r="3.500" fill="#c8d890" stroke="#333"/><path d="M9.500 16.500q7-7.500 14 0q-7 7.500-14 0z" fill="#fff" stroke="#444" stroke-width=".9"/><circle cx="16.500" cy="16.500" r="2.800" fill="#999" stroke="#333" stroke-width=".9"/><circle cx="16.500" cy="16.500" r="1" fill="#222"/></svg>
<svg style="left:487px;top:2px" width="24" height="22" viewBox="0 0 24 22"><rect x="0" y="0" width="24" height="22" fill="#8fb73e"/><path d="M3 19l18-17" stroke="#6c9a2c" stroke-dasharray="2 2"/><path d="M9.500 16.500q7-7.500 14 0q-7 7.500-14 0z" fill="#fff" stroke="#444" stroke-width=".9"/><circle cx="16.500" cy="16.500" r="2.800" fill="#999" stroke="#333" stroke-width=".9"/><circle cx="16.500" cy="16.500" r="1" fill="#222"/></svg>
<svg style="left:513px;top:2px" width="24" height="22" viewBox="0 0 24 22"><rect x="0" y="0" width="24" height="22" fill="#8fb73e"/><circle cx="11" cy="11" r="8.500" fill="#c8d890" stroke="#444"/><path d="M9.500 16.500q7-7.500 14 0q-7 7.500-14 0z" fill="#fff" stroke="#444" stroke-width=".9"/><circle cx="16.500" cy="16.500" r="2.800" fill="#999" stroke="#333" stroke-width=".9"/><circle cx="16.500" cy="16.500" r="1" fill="#222"/></svg>
<svg style="left:539px;top:2px" width="24" height="22" viewBox="0 0 24 22"><rect x="0" y="0" width="24" height="22" fill="#8fb73e"/><path d="M3.500 3.500h8v7h-8zM12.500 3.500h8v7h-8zM3.500 11.500h8v7h-8zM12.500 11.500h8v7h-8z" fill="#c8d890" stroke="#444"/><path d="M9.500 16.500q7-7.500 14 0q-7 7.500-14 0z" fill="#fff" stroke="#444" stroke-width=".9"/><circle cx="16.500" cy="16.500" r="2.800" fill="#999" stroke="#333" stroke-width=".9"/><circle cx="16.500" cy="16.500" r="1" fill="#222"/></svg>
<svg style="left:565px;top:2px" width="24" height="22" viewBox="0 0 24 22"><rect x="0" y="0" width="24" height="22" fill="#8fb73e"/><path d="M3.500 5v11q0 3 8 3t8-3v-11" fill="#c8d890" stroke="#444"/><ellipse cx="11.500" cy="5" rx="8" ry="2.800" fill="#dce8b0" stroke="#444"/><path d="M9.500 16.500q7-7.500 14 0q-7 7.500-14 0z" fill="#fff" stroke="#444" stroke-width=".9"/><circle cx="16.500" cy="16.500" r="2.800" fill="#999" stroke="#333" stroke-width=".9"/><circle cx="16.500" cy="16.500" r="1" fill="#222"/></svg>
<svg style="left:591px;top:2px" width="24" height="22" viewBox="0 0 24 22"><rect x="0" y="0" width="24" height="22" fill="#8fb73e"/><path d="M6.500 20v-16" stroke="#222" stroke-width="1.300"/><path d="M6.500 1l-3 5h6z" fill="#20a020"/><path d="M6.500 19l10-8" stroke="#2060e0" stroke-width="1.500"/><path d="M19 9l-5 1 3 3.500z" fill="#2060e0"/><path d="M9.500 16.500q7-7.500 14 0q-7 7.500-14 0z" fill="#fff" stroke="#444" stroke-width=".9"/><circle cx="16.500" cy="16.500" r="2.800" fill="#999" stroke="#333" stroke-width=".9"/><circle cx="16.500" cy="16.500" r="1" fill="#222"/></svg>
<svg style="left:617px;top:2px" width="24" height="22" viewBox="0 0 24 22"><rect x="0" y="0" width="24" height="22" fill="#8fb73e"/><path d="M2.500 5.500h19v6h-19z" fill="#fff" stroke="#333"/><path d="M5 5.500v3M8 5.500v4M11 5.500v3M14 5.500v4M17 5.500v3M2.500 2.500h19" stroke="#333" stroke-width=".8"/><path d="M9.500 16.500q7-7.500 14 0q-7 7.500-14 0z" fill="#fff" stroke="#444" stroke-width=".9"/><circle cx="16.500" cy="16.500" r="2.800" fill="#999" stroke="#333" stroke-width=".9"/><circle cx="16.500" cy="16.500" r="1" fill="#222"/></svg>
<svg style="left:643px;top:2px" width="24" height="22" viewBox="0 0 24 22"><rect x="0" y="0" width="24" height="22" fill="#8fb73e"/><circle cx="12" cy="5" r="1" fill="#456"/><path d="M5 12q7-8 14 0q-7 8-14 0z" fill="#fff" stroke="#444"/><circle cx="12" cy="12" r="3" fill="#888" stroke="#333"/></svg>
<svg style="left:671px;top:15px" width="6" height="4"><path d="M0 0h6l-3 4z" fill="#555"/></svg>
<svg style="left:685px;top:3px" width="3" height="22" viewBox="0 0 3 22"><path d="M1.500 0v22" stroke="#b8b8b8" stroke-width="2" stroke-dasharray="2 2"/></svg>
<svg style="left:692px;top:2px" width="24" height="22" viewBox="0 0 24 22"><rect x="0" y="0" width="24" height="22" fill="#8fb73e"/><path d="M3.500 6.500h12v13h-12zM3.500 6.500l3-4h12l-3 4M15.500 19.500l3-4v-13" fill="#e8eaec" stroke="#444" stroke-linejoin="round"/><path d="M15 11l1 9 2.200-2.500 2 4 1.500-.8-2-4 3.300-.3z" fill="#222"/></svg>
<svg style="left:718px;top:2px" width="24" height="22" viewBox="0 0 24 22"><rect x="0" y="0" width="24" height="22" fill="#8fb73e"/><path d="M8 3h8l4 7-4 8h-8l-4-8z" fill="#dde4ea" stroke="#444" stroke-dasharray="2 1.200"/><path d="M15 11l1 9 2.200-2.500 2 4 1.500-.8-2-4 3.300-.3z" fill="#222"/></svg>
<svg style="left:744px;top:2px" width="24" height="22" viewBox="0 0 24 22"><rect x="0" y="0" width="24" height="22" fill="#8fb73e"/><path d="M3.500 6.500h12v13h-12zM3.500 6.500l3-4h12l-3 4M15.500 19.500l3-4v-13" fill="#e8eaec" stroke="#444" stroke-linejoin="round"/><path d="M3.500 6.500l3-4h12l-3 4z" fill="#8fb73e" stroke="#444"/><path d="M15 11l1 9 2.200-2.500 2 4 1.500-.8-2-4 3.300-.3z" fill="#222"/></svg>
<svg style="left:770px;top:2px" width="24" height="22" viewBox="0 0 24 22"><rect x="0" y="0" width="24" height="22" fill="#8fb73e"/><path d="M3.500 6.500h12v13h-12zM3.500 6.500l3-4h12l-3 4M15.500 19.500l3-4v-13" fill="#e8eaec" stroke="#444" stroke-linejoin="round"/><path d="M3.500 6.500h12" stroke="#fff" stroke-width="2"/><path d="M15 11l1 9 2.200-2.500 2 4 1.500-.8-2-4 3.300-.3z" fill="#222"/></svg>
<svg style="left:796px;top:2px" width="24" height="22" viewBox="0 0 24 22"><rect x="0" y="0" width="24" height="22" fill="#8fb73e"/><path d="M3.500 6.500h12v13h-12zM3.500 6.500l3-4h12l-3 4M15.500 19.500l3-4v-13" fill="#e8eaec" stroke="#444" stroke-linejoin="round"/><rect x="14" y="5" width="3" height="3" fill="#fff" stroke="#444" stroke-width=".7"/><path d="M15 11l1 9 2.200-2.500 2 4 1.500-.8-2-4 3.300-.3z" fill="#222"/></svg>
<svg style="left:822px;top:2px" width="24" height="22" viewBox="0 0 24 22"><rect x="0" y="0" width="24" height="22" fill="#8fb73e"/><path d="M3.500 6.500h12v13h-12zM3.500 6.500l3-4h12l-3 4M15.500 19.500l3-4v-13" fill="#e8eaec" stroke="#444" stroke-linejoin="round"/><rect x="14" y="5" width="3" height="3" fill="#e0c020" stroke="#444" stroke-width=".7"/><path d="M15 11l1 9 2.200-2.500 2 4 1.500-.8-2-4 3.300-.3z" fill="#222"/></svg>
<svg style="left:848px;top:2px" width="24" height="22" viewBox="0 0 24 22"><path d="M11 3l8 14h-16z" fill="#a8c860" stroke="#567a20"/><path d="M15 11l1 9 2.200-2.500 2 4 1.500-.8-2-4 3.300-.3z" fill="#222"/></svg>
<svg style="left:874px;top:2px" width="24" height="22" viewBox="0 0 24 22"><path d="M11 3l8 14h-16z" fill="none" stroke="#333"/><rect x="9.500" y="1.500" width="3" height="3" fill="#e0c020" stroke="#444" stroke-width=".6"/><rect x="1.500" y="15.500" width="3" height="3" fill="#e0c020" stroke="#444" stroke-width=".6"/><path d="M15 11l1 9 2.200-2.500 2 4 1.500-.8-2-4 3.300-.3z" fill="#222"/></svg>
<svg style="left:900px;top:2px" width="24" height="22" viewBox="0 0 24 22"><rect x="0" y="0" width="24" height="22" fill="#8fb73e"/><path d="M5.500 19v-13M16.500 19v-13M5.500 19h11" stroke="#333" fill="none" stroke-width="1.200"/><path d="M5.500 1l-3 5h6zM16.500 1l-3 5h6z" fill="#333"/><path d="M15 11l1 9 2.200-2.500 2 4 1.500-.8-2-4 3.300-.3z" fill="#222"/></svg>
<svg style="left:926px;top:2px" width="24" height="22" viewBox="0 0 24 22"><rect x="0" y="0" width="24" height="22" fill="#8fb73e"/><path d="M3.500 3.500h6v6h-6zM3.500 12.500h6v6h-6z" fill="#c8d890" stroke="#333"/><circle cx="16" cy="6" r="3.500" fill="#c8d890" stroke="#333"/><path d="M3.500 15.500h6M6.500 12.500v6" stroke="#333" stroke-width=".7"/><path d="M15 11l1 9 2.200-2.500 2 4 1.500-.8-2-4 3.300-.3z" fill="#222"/></svg>
<svg style="left:952px;top:2px" width="24" height="22" viewBox="0 0 24 22"><rect x="0" y="0" width="24" height="22" fill="#8fb73e"/><circle cx="11" cy="11" r="5.500" fill="none" stroke="#333" stroke-width="1.200"/><path d="M11 3v16M3 11h16" stroke="#333" stroke-width="1.200"/><path d="M15 11l1 9 2.200-2.500 2 4 1.500-.8-2-4 3.300-.3z" fill="#222"/></svg>
<svg style="left:978px;top:2px" width="24" height="22" viewBox="0 0 24 22"><rect x="0" y="0" width="24" height="22" fill="#8fb73e"/><path d="M3 13l9-9h8v6l-9 9z" fill="#f4f4f4" stroke="#444"/><circle cx="17" cy="7" r="1.200" fill="#444"/><path d="M15 11l1 9 2.200-2.500 2 4 1.500-.8-2-4 3.300-.3z" fill="#222"/></svg>
<div style="left:1007px;top:4px;width:1px;height:22px;background:#c8c8c8"></div>
<svg style="left:1013px;top:2px" width="24" height="22" viewBox="0 0 24 22"><path d="M2.500 2.500h9v12h-9zM5.500 5.500h9v12h-9z" fill="#fff" stroke="#444"/><path d="M8.500 8.500h9v12h-9z" fill="#fff" stroke="#444"/><path d="M12 14l7 7M19 14l-7 7" stroke="#e01030" stroke-width="2.200"/></svg>
<svg style="left:1039px;top:15px" width="6" height="4"><path d="M0 0h6l-3 4z" fill="#555"/></svg>
<svg style="left:1053px;top:3px" width="3" height="22" viewBox="0 0 3 22"><path d="M1.500 0v22" stroke="#b8b8b8" stroke-width="2" stroke-dasharray="2 2"/></svg>
<svg style="left:1063px;top:2px" width="24" height="22" viewBox="0 0 24 22"><path d="M2 3.500h18M4.500 3.500v6h3v-6M13.500 3.500v6h3v-6" fill="#ddd" stroke="#333" stroke-width="1.200"/><rect x="7.500" y="10.500" width="6" height="10" fill="#8fb73e" stroke="#456a20"/></svg>
<svg style="left:1089px;top:2px" width="24" height="22" viewBox="0 0 24 22"><path d="M3 6h16M3 2.500v7M19 2.500v7" stroke="#6c9a2c" stroke-width="1.300"/><rect x="2.500" y="14.500" width="18" height="5" fill="#fff" stroke="#333"/><path d="M6 14.500v2.500M9 14.500v2.500M12 14.500v2.500M15 14.500v2.500M18 14.500v2.500" stroke="#333" stroke-width=".7"/></svg>
<svg style="left:1115px;top:2px" width="24" height="22" viewBox="0 0 24 22"><path d="M3.500 19.500v-12a12 12 0 0 1 12 12z" fill="#fff" stroke="#333"/><path d="M5 3q12 1 15 15" fill="none" stroke="#6c9a2c" stroke-width="1.300"/><path d="M3 1l4 2-4 3zM22 20l-2-4-3 3z" fill="#6c9a2c"/></svg>
<svg style="left:1141px;top:2px" width="24" height="22" viewBox="0 0 24 22"><circle cx="11" cy="8" r="5.500" fill="#fff" stroke="#333"/><path d="M11 8h5" stroke="#6c9a2c" stroke-width="1.500"/><circle cx="11" cy="8" r="1.300" fill="#6c9a2c"/><rect x="2.500" y="15.500" width="18" height="4" fill="#fff" stroke="#333"/></svg>
<svg style="left:1167px;top:2px" width="24" height="22" viewBox="0 0 24 22"><path d="M5.500 6.500h13v5h-13z" fill="#8fb73e" stroke="#333"/><path d="M5.500 6.500l2-3h13l-2 3M18.500 11.500l2-3v-5" fill="#ddd" stroke="#333"/><rect x="2.500" y="15.500" width="18" height="4" fill="#fff" stroke="#333"/></svg>
<svg style="left:1193px;top:2px" width="24" height="22" viewBox="0 0 24 22"><rect x="3" y="3" width="11" height="11" fill="#8fb73e"/><path d="M19.500 1.500v18h-18v-3h15v-15z" fill="#fff" stroke="#333"/></svg>
<svg style="left:1219px;top:2px" width="24" height="22" viewBox="0 0 24 22"><path d="M3.500 7.500h10v10h-10zM3.500 7.500l3-4h10l-3 4M13.500 17.500l3-4v-10" fill="#888" stroke="#222"/><path d="M3.500 11h10M3.500 14h10M7 7.500v10M10.500 7.500v10" stroke="#222" stroke-width=".7"/><path d="M20.500 1.500v18h-8" fill="none" stroke="#333"/></svg>
<svg style="left:1246px;top:2px" width="24" height="22" viewBox="0 0 24 22"><path d="M7 3h8l5 7-4 9h-9l-5-8z" fill="#eee" stroke="#c8c8c8"/></svg>
<svg style="left:1272px;top:2px" width="24" height="22" viewBox="0 0 24 22"><path d="M4.500 1.500h10l4 4v15h-14z" fill="#fff" stroke="#333"/><path d="M8 12h8M12 8v8" stroke="#6c9a2c" stroke-width="2.200"/></svg>
<svg style="left:1297px;top:15px" width="6" height="4"><path d="M0 0h6l-3 4z" fill="#555"/></svg>
<!--BTB-END-->
</div>
<div id="status" class="a" style="left:0;top:1017px;width:1920px;height:23px;background:#8f9497">
<!--STATUS-START-->
<div class="t" style="left:14px;top:5px;font-size:12.500px;color:#fff">准备</div>
<div style="left:1767px;top:3px;width:90px;height:18px;border:1px solid #a4a8ab;background:#8f9497"></div>
<div class="t" style="left:1779px;top:5px;font-size:11px;color:#e8e8e8;font-family:'Liberation Mono',monospace;letter-spacing:-.6px">0:00:11.27</div>
<div style="left:1847px;top:4px;width:10px;height:17px;background:#f4f4f4"></div>
<svg style="left:1849px;top:12px" width="6" height="4"><path d="M0 0h6l-3 4z" fill="#bbb"/></svg>
<div style="left:1860px;top:4px;width:32px;height:13px;background:#000;border-left:3px solid #1a6a1a"></div>
<div style="left:1896px;top:4px;width:13px;height:13px;background:linear-gradient(135deg,#1a8a2a,#4ac04a)"></div>
<div style="left:1910px;top:-42px;width:12px;height:59px;background:#3a4552;border-radius:3px 0 0 3px"></div>
<svg style="left:1914px;top:-36px" width="6" height="50" viewBox="0 0 6 50"><path d="M0 0h6M0 3h6M0 6h6M0 9h6M0 12h6M0 15h6M0 18h6M0 21h6M0 24h6M0 27h6M0 30h6M0 33h6M0 36h6" stroke="#222c38"/><path d="M0 40h6M0 43h6M0 46h6" stroke="#40e0c0"/></svg>
<!--STATUS-END-->
</div>
</body></html>
